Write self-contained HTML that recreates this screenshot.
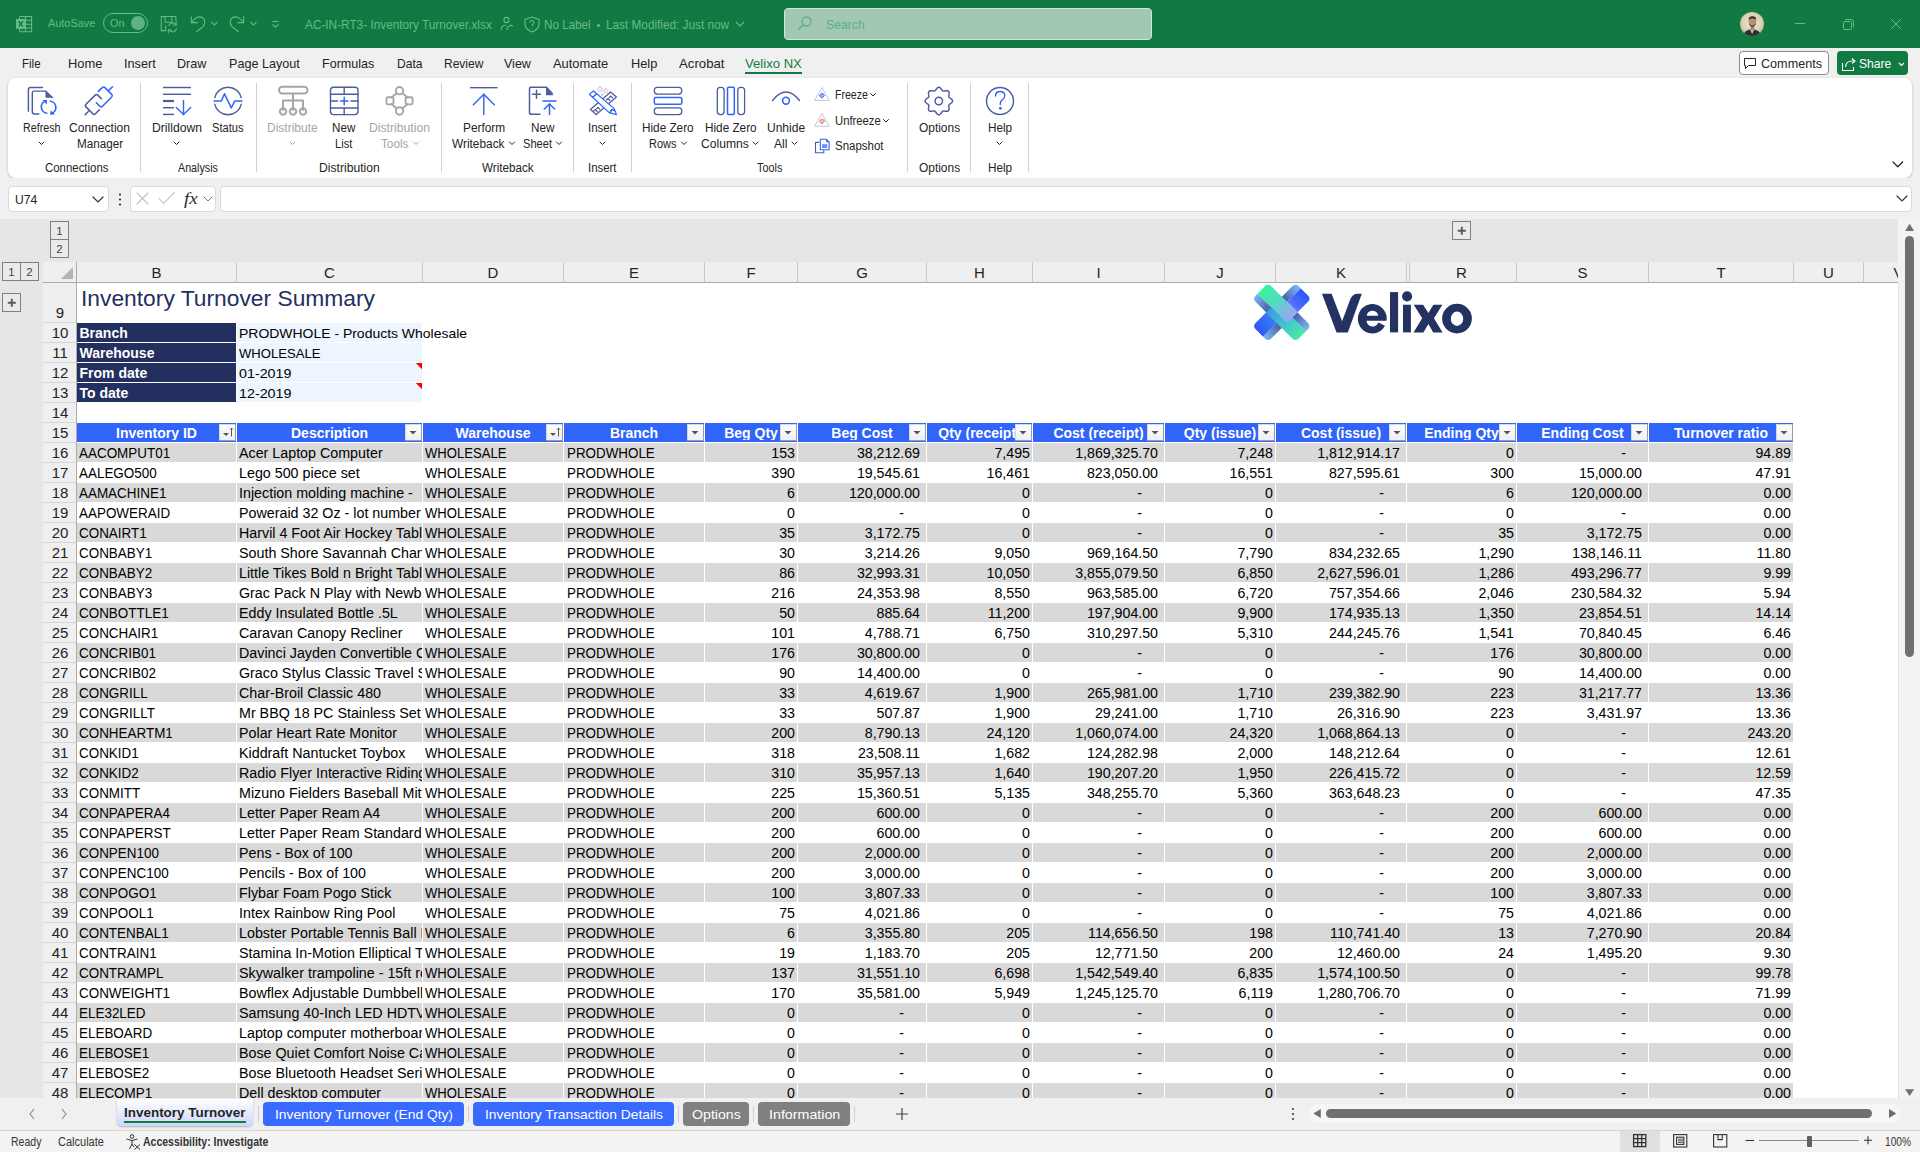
<!DOCTYPE html><html><head><meta charset="utf-8"><title>Excel</title><style>
*{margin:0;padding:0;box-sizing:content-box;}
html,body{width:1920px;height:1152px;overflow:hidden;background:#f0f0f0;font-family:"Liberation Sans",sans-serif;}
.r{position:absolute;}
.t{position:absolute;white-space:nowrap;font-family:"Liberation Sans",sans-serif;}
</style></head><body><div class="r" style="left:0px;top:0px;width:1920px;height:48px;background:#117a42;"></div>
<svg class="r" style="left:10px;top:10px" width="30" height="28" viewBox="10 10 30 28" fill="none" stroke="#66bb88" stroke-width="1.1">
<rect x="19.6" y="16.5" width="12" height="15.2" rx="0.8"/><path d="M25.5 16.5 V31.7 M25.5 20.3 H31.6 M25.5 24.2 H31.6 M25.5 28 H31.6 M19.6 20.3 H25.5 M19.6 28 H25.5"/>
<rect x="16" y="19" width="9.5" height="9.8" fill="#66bb88" stroke="none"/>
<path d="M18.6 21.3 L22.9 26.6 M22.9 21.3 L18.6 26.6" stroke="#117a42" stroke-width="1.4"/></svg>
<div class="t" style="top:18.27px;font-size:11.5px;line-height:11.5px;color:#66bb88;left:48.00px;transform-origin:0 0;transform:scaleX(0.9485);">AutoSave</div>
<div class="r" style="left:103px;top:13px;width:43px;height:18px;border:1px solid #66bb88;border-radius:10px;"></div>
<div class="t" style="top:18.27px;font-size:11.5px;line-height:11.5px;color:#66bb88;left:109.50px;transform-origin:0 0;transform:scaleX(0.9452);">On</div>
<div class="r" style="left:131px;top:16px;width:14px;height:14px;border-radius:7px;background:#5fb283;"></div>
<svg class="r" style="left:140px;top:8px" width="150" height="32" viewBox="140 8 150 32" fill="none" stroke="#66bb88" stroke-width="1.05" stroke-linejoin="miter">
<path d="M175.9 21.2 V16.4 H161.3 V30.6 H165.7 V25.6"/><path d="M165 16.4 V22.2 H171.9 V16.4"/>
<path d="M168.6 26.2 A4.2 4.2 0 0 1 176 24.5"/><path d="M176.6 28.4 A4.2 4.2 0 0 1 169.2 30.2"/>
<path d="M176.2 21.6 V24.9 H173" /><path d="M168.3 33.2 V29.8 H171.6"/>
<path d="M191.3 16.2 V22.6 H197.8"/><path d="M191.9 22.1 C194.5 17.6 199.3 15.6 202.6 17.8 C205.6 19.9 205.3 24.2 203.2 26.3 L196.3 32"/>
<path d="M211.3 21.9 L214.4 24.9 L217.5 21.9"/>
<path d="M243.7 16.2 V22.6 H237.2"/><path d="M243.1 22.1 C240.5 17.6 235.7 15.6 232.4 17.8 C229.4 19.9 229.7 24.2 231.8 26.3 L238.7 32"/>
<path d="M250.3 21.9 L253.4 24.9 L256.5 21.9"/>
<path d="M272.2 21.5 H278.7"/><path d="M272.5 24.4 L275.5 27.2 L278.5 24.4"/>
</svg>
<div class="t" class="fn" style="top:19.07px;font-size:12.2px;line-height:12.2px;color:#66bb88;left:305.00px;transform-origin:0 0;transform:scaleX(0.9689);">AC-IN-RT3- Inventory Turnover.xlsx</div>
<svg class="r" style="left:498px;top:14px" width="250" height="20" viewBox="0 0 250 20" fill="none" stroke="#66bb88" stroke-width="1.1">
<circle cx="8.5" cy="6" r="2.6"/><path d="M3 16 a5 5 0 0 1 5 -5"/><circle cx="4" cy="12" r="0"/><path d="M9 16 a4 4 0 0 1 6 -4"/>
<path d="M34 3 L41 5.5 V10 C41 14 38 16.5 34 18 C30 16.5 27 14 27 10 V5.5 Z"/><path d="M32 8.5 a2 2 0 1 1 2.5 2 v1.5 M34.2 14 v0.5"/>
<path d="M238 8 l4 4 l4 -4"/></svg>
<div class="t" style="top:19.07px;font-size:12.2px;line-height:12.2px;color:#66bb88;left:544.00px;transform-origin:0 0;transform:scaleX(0.9563);">No Label</div>
<div class="r" style="left:596.5px;top:23.5px;width:3px;height:3px;background:#66bb88;border-radius:2px;"></div>
<div class="t" style="top:19.07px;font-size:12.2px;line-height:12.2px;color:#66bb88;left:606.40px;transform-origin:0 0;transform:scaleX(0.9664);">Last Modified: Just now</div>
<div class="r" style="left:784px;top:8px;width:366px;height:30px;background:#a1c8b2;border:1px solid #d4e6da;border-radius:4px;"></div>
<svg class="r" style="left:796px;top:15px" width="18" height="18" viewBox="0 0 18 18" fill="none" stroke="#5fae7f" stroke-width="1.3">
<circle cx="10.5" cy="6.5" r="4.5"/><path d="M7.2 9.8 L2.5 14.5"/></svg>
<div class="t" style="top:18.87px;font-size:12.2px;line-height:12.2px;color:#5fae7f;left:826.00px;transform-origin:0 0;transform:scaleX(1.0037);">Search</div>
<svg class="r" style="left:1740px;top:12px" width="24" height="24" viewBox="0 0 24 24">
<defs><radialGradient id="av" cx="50%" cy="45%" r="60%"><stop offset="0" stop-color="#f2ead6"/><stop offset="0.7" stop-color="#d9cfb4"/><stop offset="1" stop-color="#a89c84"/></radialGradient>
<clipPath id="avc"><circle cx="12" cy="12" r="12"/></clipPath></defs>
<g clip-path="url(#avc)"><rect width="24" height="24" fill="url(#av)"/>
<path d="M3 24 Q4.5 17.5 12 17 Q19.5 17.5 21.5 24Z" fill="#2f2f33"/><path d="M9.8 17.2 L12.2 22 L14.6 17.2 Z" fill="#b9bcc4"/>
<rect x="10.6" y="13" width="3.6" height="4.5" fill="#a8806a"/>
<ellipse cx="12.4" cy="9.6" rx="3.9" ry="4.9" fill="#b98f76"/>
<path d="M8.4 8.6 Q8.2 4.2 12.4 4.2 Q16.6 4.2 16.4 8.6 L15.9 7.2 Q12.4 5.6 8.9 7.2Z" fill="#3b2c24"/>
<path d="M8.8 11 Q9.2 14.6 12.4 14.8 Q15.6 14.6 16 11 Q15 13.2 12.4 13.4 Q9.8 13.2 8.8 11Z" fill="#5a4034"/>
</g></svg>
<svg class="r" style="left:1780px;top:10px" width="140" height="28" viewBox="0 0 140 28" fill="none" stroke="#66bb88" stroke-width="1">
<path d="M15 13.5 H25"/>
<rect x="63.5" y="11.5" width="8" height="8" rx="1"/><path d="M65.5 9.5 H71.5 Q73.5 9.5 73.5 11.5 V17.5"/>
<path d="M111 9 L121 19 M121 9 L111 19"/></svg>
<div class="r" style="left:0px;top:48px;width:1920px;height:30px;background:#f0f0f0;"></div>
<div class="t" class="mn" style="top:57.93px;font-size:12.6px;line-height:12.6px;color:#242424;left:21.90px;transform-origin:0 0;transform:scaleX(0.9161);">File</div>
<div class="t" class="mn" style="top:57.93px;font-size:12.6px;line-height:12.6px;color:#242424;left:68.00px;transform-origin:0 0;transform:scaleX(1.0235);">Home</div>
<div class="t" class="mn" style="top:57.93px;font-size:12.6px;line-height:12.6px;color:#242424;left:124.00px;transform-origin:0 0;transform:scaleX(1.0091);">Insert</div>
<div class="t" class="mn" style="top:57.93px;font-size:12.6px;line-height:12.6px;color:#242424;left:177.20px;transform-origin:0 0;transform:scaleX(1.0033);">Draw</div>
<div class="t" class="mn" style="top:57.93px;font-size:12.6px;line-height:12.6px;color:#242424;left:229.00px;transform-origin:0 0;transform:scaleX(0.9992);">Page Layout</div>
<div class="t" class="mn" style="top:57.93px;font-size:12.6px;line-height:12.6px;color:#242424;left:322.20px;transform-origin:0 0;transform:scaleX(0.9960);">Formulas</div>
<div class="t" class="mn" style="top:57.93px;font-size:12.6px;line-height:12.6px;color:#242424;left:396.70px;transform-origin:0 0;transform:scaleX(0.9619);">Data</div>
<div class="t" class="mn" style="top:57.93px;font-size:12.6px;line-height:12.6px;color:#242424;left:444.40px;transform-origin:0 0;transform:scaleX(0.9537);">Review</div>
<div class="t" class="mn" style="top:57.93px;font-size:12.6px;line-height:12.6px;color:#242424;left:503.90px;transform-origin:0 0;transform:scaleX(0.9932);">View</div>
<div class="t" class="mn" style="top:57.93px;font-size:12.6px;line-height:12.6px;color:#242424;left:553.10px;transform-origin:0 0;transform:scaleX(1.0235);">Automate</div>
<div class="t" class="mn" style="top:57.93px;font-size:12.6px;line-height:12.6px;color:#242424;left:631.20px;transform-origin:0 0;transform:scaleX(1.0149);">Help</div>
<div class="t" class="mn" style="top:57.93px;font-size:12.6px;line-height:12.6px;color:#242424;left:679.40px;transform-origin:0 0;transform:scaleX(1.0478);">Acrobat</div>
<div class="t" class="mn" style="top:57.93px;font-size:12.6px;line-height:12.6px;color:#107c41;left:745.20px;transform-origin:0 0;transform:scaleX(1.0416);">Velixo NX</div>
<div class="r" style="left:745px;top:72px;width:57px;height:2px;background:#107c41;"></div>
<div class="r" style="left:1739px;top:51px;width:88px;height:22px;background:#fff;border:1px solid #8c8c8c;border-radius:4px;"></div>
<svg class="r" style="left:1743px;top:57px" width="14" height="14" viewBox="0 0 14 14" fill="none" stroke="#242424" stroke-width="1">
<path d="M1.5 1.5 H12.5 V8.5 H5.5 L2.5 11.5 V8.5 H1.5 Z"/></svg>
<div class="t" style="top:57.93px;font-size:12.6px;line-height:12.6px;color:#242424;left:1760.60px;transform-origin:0 0;transform:scaleX(1.0014);">Comments</div>
<div class="r" style="left:1837px;top:51px;width:71px;height:24px;background:#117a42;border-radius:4px;"></div>
<svg class="r" style="left:1841px;top:56px" width="70" height="16" viewBox="0 0 70 16" fill="none" stroke="#fff" stroke-width="1.1">
<path d="M1.5 7 V14.5 H12.5 V11"/><path d="M4.5 11 Q5 5 11 5 H13"/><path d="M11 2.5 L14 5 L11 7.5"/><path d="M58 7 l2.5 2.5 l2.5 -2.5"/></svg>
<div class="t" style="top:57.93px;font-size:12.6px;line-height:12.6px;color:#ffffff;left:1858.50px;transform-origin:0 0;transform:scaleX(0.9607);">Share</div>
<div class="r" style="left:8px;top:78px;width:1904px;height:100px;background:#fff;border-radius:8px;box-shadow:0 1px 3px rgba(0,0,0,0.22);"></div>
<div class="r" style="left:140px;top:83px;width:1px;height:89px;background:#d2d2d2;"></div>
<div class="r" style="left:256px;top:83px;width:1px;height:89px;background:#d2d2d2;"></div>
<div class="r" style="left:441px;top:83px;width:1px;height:89px;background:#d2d2d2;"></div>
<div class="r" style="left:573px;top:83px;width:1px;height:89px;background:#d2d2d2;"></div>
<div class="r" style="left:631px;top:83px;width:1px;height:89px;background:#d2d2d2;"></div>
<div class="r" style="left:907px;top:83px;width:1px;height:89px;background:#d2d2d2;"></div>
<div class="r" style="left:970px;top:83px;width:1px;height:89px;background:#d2d2d2;"></div>
<div class="r" style="left:1028px;top:83px;width:1px;height:89px;background:#d2d2d2;"></div>
<div class="t" class="rl" style="top:121.84px;font-size:12px;line-height:12px;color:#242424;left:22.70px;transform-origin:0 0;transform:scaleX(0.8925);">Refresh</div>
<div class="t" class="rl" style="top:121.84px;font-size:12px;line-height:12px;color:#242424;left:68.75px;transform-origin:0 0;transform:scaleX(1.0048);">Connection</div>
<div class="t" class="rl" style="top:137.84px;font-size:12px;line-height:12px;color:#242424;left:76.60px;transform-origin:0 0;transform:scaleX(0.9734);">Manager</div>
<div class="t" class="rl" style="top:121.84px;font-size:12px;line-height:12px;color:#242424;left:151.60px;transform-origin:0 0;transform:scaleX(1.0132);">Drilldown</div>
<div class="t" class="rl" style="top:121.84px;font-size:12px;line-height:12px;color:#242424;left:212.20px;transform-origin:0 0;transform:scaleX(0.9259);">Status</div>
<div class="t" class="rl" style="top:121.84px;font-size:12px;line-height:12px;color:#a6a6a6;left:267.30px;transform-origin:0 0;transform:scaleX(1.0003);">Distribute</div>
<div class="t" class="rl" style="top:121.84px;font-size:12px;line-height:12px;color:#242424;left:332.30px;transform-origin:0 0;transform:scaleX(0.9706);">New</div>
<div class="t" class="rl" style="top:137.84px;font-size:12px;line-height:12px;color:#242424;left:335.30px;transform-origin:0 0;transform:scaleX(0.9264);">List</div>
<div class="t" class="rl" style="top:121.84px;font-size:12px;line-height:12px;color:#a6a6a6;left:369.40px;transform-origin:0 0;transform:scaleX(1.0163);">Distribution</div>
<div class="t" class="rl" style="top:137.84px;font-size:12px;line-height:12px;color:#a6a6a6;left:381.30px;transform-origin:0 0;transform:scaleX(0.9781);">Tools</div>
<div class="t" class="rl" style="top:121.84px;font-size:12px;line-height:12px;color:#242424;left:463.30px;transform-origin:0 0;transform:scaleX(0.9889);">Perform</div>
<div class="t" class="rl" style="top:137.84px;font-size:12px;line-height:12px;color:#242424;left:452.40px;transform-origin:0 0;transform:scaleX(0.9882);">Writeback</div>
<div class="t" class="rl" style="top:121.84px;font-size:12px;line-height:12px;color:#242424;left:531.30px;transform-origin:0 0;transform:scaleX(0.9748);">New</div>
<div class="t" class="rl" style="top:137.84px;font-size:12px;line-height:12px;color:#242424;left:523.00px;transform-origin:0 0;transform:scaleX(0.9248);">Sheet</div>
<div class="t" class="rl" style="top:121.84px;font-size:12px;line-height:12px;color:#242424;left:588.20px;transform-origin:0 0;transform:scaleX(0.9496);">Insert</div>
<div class="t" class="rl" style="top:121.84px;font-size:12px;line-height:12px;color:#242424;left:642.40px;transform-origin:0 0;transform:scaleX(0.9794);">Hide Zero</div>
<div class="t" class="rl" style="top:137.84px;font-size:12px;line-height:12px;color:#242424;left:649.40px;transform-origin:0 0;transform:scaleX(0.9132);">Rows</div>
<div class="t" class="rl" style="top:121.84px;font-size:12px;line-height:12px;color:#242424;left:705.30px;transform-origin:0 0;transform:scaleX(0.9794);">Hide Zero</div>
<div class="t" class="rl" style="top:137.84px;font-size:12px;line-height:12px;color:#242424;left:701.40px;transform-origin:0 0;transform:scaleX(1.0095);">Columns</div>
<div class="t" class="rl" style="top:121.84px;font-size:12px;line-height:12px;color:#242424;left:767.20px;transform-origin:0 0;transform:scaleX(1.0019);">Unhide</div>
<div class="t" class="rl" style="top:137.84px;font-size:12px;line-height:12px;color:#242424;left:774.10px;transform-origin:0 0;transform:scaleX(1.0048);">All</div>
<div class="t" class="rl" style="top:88.84px;font-size:12px;line-height:12px;color:#242424;left:834.60px;transform-origin:0 0;transform:scaleX(0.8782);">Freeze</div>
<div class="t" class="rl" style="top:114.84px;font-size:12px;line-height:12px;color:#242424;left:834.60px;transform-origin:0 0;transform:scaleX(0.9386);">Unfreeze</div>
<div class="t" class="rl" style="top:140.34px;font-size:12px;line-height:12px;color:#242424;left:834.60px;transform-origin:0 0;transform:scaleX(0.9565);">Snapshot</div>
<div class="t" class="rl" style="top:121.84px;font-size:12px;line-height:12px;color:#242424;left:918.60px;transform-origin:0 0;transform:scaleX(0.9938);">Options</div>
<div class="t" class="rl" style="top:121.84px;font-size:12px;line-height:12px;color:#242424;left:987.50px;transform-origin:0 0;transform:scaleX(0.9765);">Help</div>
<div class="t" class="rl" style="top:161.84px;font-size:12px;line-height:12px;color:#242424;left:44.80px;transform-origin:0 0;transform:scaleX(0.9519);">Connections</div>
<div class="t" class="rl" style="top:161.84px;font-size:12px;line-height:12px;color:#242424;left:178.40px;transform-origin:0 0;transform:scaleX(0.8929);">Analysis</div>
<div class="t" class="rl" style="top:161.84px;font-size:12px;line-height:12px;color:#242424;left:318.70px;transform-origin:0 0;transform:scaleX(1.0113);">Distribution</div>
<div class="t" class="rl" style="top:161.84px;font-size:12px;line-height:12px;color:#242424;left:482.20px;transform-origin:0 0;transform:scaleX(0.9713);">Writeback</div>
<div class="t" class="rl" style="top:161.84px;font-size:12px;line-height:12px;color:#242424;left:588.20px;transform-origin:0 0;transform:scaleX(0.9496);">Insert</div>
<div class="t" class="rl" style="top:161.84px;font-size:12px;line-height:12px;color:#242424;left:757.20px;transform-origin:0 0;transform:scaleX(0.9031);">Tools</div>
<div class="t" class="rl" style="top:161.84px;font-size:12px;line-height:12px;color:#242424;left:918.60px;transform-origin:0 0;transform:scaleX(0.9938);">Options</div>
<div class="t" class="rl" style="top:161.84px;font-size:12px;line-height:12px;color:#242424;left:987.50px;transform-origin:0 0;transform:scaleX(0.9765);">Help</div>
<svg class="r" style="left:0;top:78px" width="1920" height="100" viewBox="0 78 1920 100" fill="none" stroke-linecap="round" stroke-linejoin="round">
<!-- chevrons -->
<g stroke="#242424" stroke-width="1">
<path d="M39 142 l2.5 2.5 l2.5 -2.5"/><path d="M174 142 l2.5 2.5 l2.5 -2.5"/><path d="M600 142 l2.5 2.5 l2.5 -2.5"/><path d="M997 142 l2.5 2.5 l2.5 -2.5"/>
<path d="M509.5 142 l2.5 2.5 l2.5 -2.5"/><path d="M556.5 142 l2.5 2.5 l2.5 -2.5"/>
<path d="M681.5 142 l2.5 2.5 l2.5 -2.5"/><path d="M753 142 l2.5 2.5 l2.5 -2.5"/><path d="M792 142 l2.5 2.5 l2.5 -2.5"/>
<path d="M870.5 93.5 l2.5 2.5 l2.5 -2.5"/><path d="M883.5 119.5 l2.5 2.5 l2.5 -2.5"/>
<path d="M1893 162 l4.8 4.8 l4.8 -4.8" stroke-width="1.3"/>
</g>
<g stroke="#a6a6a6" stroke-width="1"><path d="M290 142 l2.5 2.5 l2.5 -2.5"/><path d="M413.5 142 l2.5 2.5 l2.5 -2.5"/></g>
<!-- refresh -->
<g stroke="#4d5d9c" stroke-width="1.45"><path d="M42.4 87.4 H30.5 Q28.4 87.4 28.4 89.5 V111.3"/><path d="M38.8 114 H34.5 Q32.3 114 32.3 111.8 V93.3 Q32.3 91.1 34.5 91.1 H45.5 L52.3 97.6"/></g>
<path d="M45.5 91 L52.6 97.8 H45.5 Z" fill="#4d5d9c"/>
<g stroke="#3165f5" stroke-width="1.65"><path d="M46.8 113.2 A6.3 6.3 0 0 1 46.3 100.8"/><path d="M50.4 101.2 A6.3 6.3 0 0 1 50.9 113.6"/></g>
<path d="M42.5 100 L46.9 100 L46.9 104.4 Z" fill="#3165f5"/><path d="M55 114.6 L50.5 114.6 L50.5 110.2 Z" fill="#3165f5"/>
<!-- connection manager -->
<g stroke="#3165f5" stroke-width="1.55"><path d="M98.3 91.4 L102.3 87.6 Q103.6 86.4 104.9 87.6 L111.7 94.4 Q112.9 95.7 111.7 97 L102.5 106.3 Q101.2 107.6 99.9 106.3 L96.3 102.8"/><path d="M108.5 90.6 L112.5 86.8"/></g>
<g stroke="#4d5d9c" stroke-width="1.55"><path d="M101.4 98.6 L97.8 95.1 Q96.5 93.8 95.2 95.1 L86 104.3 Q84.7 105.6 86 106.9 L92.8 113.7 Q94.1 115 95.4 113.7 L99.4 109.8"/><path d="M88.6 111.3 L85.2 114.6"/></g>
<!-- drilldown -->
<g stroke="#4d5d9c" stroke-width="1.45" stroke-linecap="butt"><path d="M163 87.5 H191"/><path d="M163 94.3 H191"/><path d="M163 101 H174"/><path d="M163 107.7 H174"/><path d="M163 114.4 H174"/></g>
<path d="M163 101 H174" stroke="#4d5d9c" stroke-width="2.2" stroke-linecap="butt"/>
<g stroke="#3165f5" stroke-width="1.45"><path d="M183.5 100.5 V114.5"/><path d="M176.3 107.5 L183.5 114.6 L190.7 107.5"/></g>
<!-- status -->
<g stroke="#4d5d9c" stroke-width="1.4"><path d="M214.7 97.6 A13.7 13.7 0 0 1 241.3 97.6"/><path d="M214.65 104.1 A13.7 13.7 0 0 0 241.35 104.1"/></g>
<path d="M214 101 H221.4 L224.5 93.8 L231.3 108 L234.7 101 H242" stroke="#3165f5" stroke-width="1.55"/>
<!-- distribute (gray) -->
<g stroke="#a6a6a6" stroke-width="2"><rect x="279" y="86.8" width="28.5" height="6.6" rx="3.2"/><path d="M293 93.4 V110"/><path d="M283 110 V100.6 H303 V110"/>
<circle cx="283" cy="111.5" r="3.2"/><circle cx="293" cy="111.5" r="3.2"/><circle cx="303" cy="111.5" r="3.2"/></g>
<!-- new list -->
<g stroke="#4d5d9c" stroke-width="1.4"><rect x="330.5" y="87.3" width="27.5" height="27.3" rx="3"/><path d="M344.2 87.3 V94.2 M344.2 108 V114.6"/><path d="M330.5 94.2 H358 M330.5 108 H358"/><path d="M330.5 101 H337.5 M351 101 H358"/></g>
<g stroke="#3165f5" stroke-width="1.45"><path d="M340.5 101 H348 M344.2 97.3 V104.8"/></g>
<!-- distribution tools (gray) -->
<g stroke="#a6a6a6" stroke-width="1.9"><circle cx="399.5" cy="90.7" r="3.7"/><circle cx="399.5" cy="111" r="3.7"/><rect x="386.5" y="97.2" width="7" height="7.2" rx="1.5"/><rect x="405.6" y="97.2" width="7" height="7.2" rx="1.5"/>
<path d="M396.6 93.2 L391.5 97.5 M402.4 93.2 L407.7 97.5 M391.5 104 L396.6 108.5 M407.7 104 L402.4 108.5"/></g>
<!-- perform writeback -->
<path d="M470 87.7 H497.5" stroke="#4d5d9c" stroke-width="1.4" stroke-linecap="butt"/>
<g stroke="#3165f5" stroke-width="1.45"><path d="M483.8 94.2 V114.5"/><path d="M473.3 104.8 L483.8 94.2 L494.3 104.8"/></g>
<!-- new sheet -->
<g stroke="#4d5d9c" stroke-width="1.5"><path d="M540 114.3 H531.3 Q529.5 114.3 529.5 112.5 V89 Q529.5 87.3 531.3 87.3 H546.5 L552.3 93.5"/><path d="M532.5 94.3 H540.5 M536.5 90.3 V98.3"/></g>
<path d="M546 87.3 L553.5 95.3 H546 Z" fill="#4d5d9c"/>
<g stroke="#3165f5" stroke-width="1.55"><path d="M542.5 101 H556.5" stroke-linecap="butt"/><path d="M549.5 104 V114.5"/><path d="M544.3 109 L549.5 104 L554.7 109"/></g>
<!-- insert (pencil ruler) -->
<g stroke="#4d5d9c" stroke-width="1.3"><path d="M590.4 109.6 L610.6 91.9 L616.4 96.9 L596.2 114.5 Z"/><path d="M593.8 111 l1.6 -1.4 l1.8 1.9 M596.6 108.6 l1.4 -1.2 l1.6 1.6 M606.5 99.8 l1.6 -1.4 l1.7 1.8 M609.4 97.3 l1.4 -1.2 l1.6 1.7"/></g>
<path d="M592.6 97.3 L609.2 112.6 L616.5 114.6 L614.2 108.6 L596.7 93.8 Z" fill="#fff" stroke="#3165f5" stroke-width="1.2"/>
<path d="M589.4 94.2 L593.5 91 L596.7 93.8 L592.6 97.3 Z" fill="#fff" stroke="#3165f5" stroke-width="1.2"/>
<path d="M610.2 112.3 L611.6 109.6 L614.5 110.6" stroke="#3165f5" stroke-width="1.6"/>
<g stroke="#b4b8cc" stroke-width="0.7"><path d="M600 86.3 l0.9 1.7 l1.9 0.3 l-1.4 1.3 l0.3 1.9 l-1.7 -0.9 l-1.7 0.9 l0.3 -1.9 l-1.4 -1.3 l1.9 -0.3 z"/><path d="M605.6 88.5 l0.8 1.5 l1.7 0.3 l-1.2 1.1 l0.3 1.7 l-1.6 -0.8 l-1.5 0.8 l0.3 -1.7 l-1.2 -1.1 l1.7 -0.3 z"/></g>
<circle cx="602.2" cy="94.6" r="1.1" fill="#b8bccc"/>
<!-- hide zero rows -->
<g stroke="#4d5d9c" stroke-width="1.3"><rect x="654.3" y="87.3" width="27.5" height="6.8" rx="3"/><rect x="654.3" y="107.8" width="27.5" height="6.8" rx="3"/></g>
<rect x="654.3" y="97.5" width="27.5" height="6.8" rx="1.5" stroke="#3165f5" stroke-width="1.5"/>
<!-- hide zero columns -->
<g stroke="#4d5d9c" stroke-width="1.3"><rect x="717.3" y="87.3" width="6.8" height="27.3" rx="3"/><rect x="737.8" y="87.3" width="6.8" height="27.3" rx="3"/></g>
<rect x="727.5" y="87.3" width="6.8" height="27.3" rx="1" stroke="#3165f5" stroke-width="1.5"/>
<!-- unhide all -->
<path d="M772.5 100.5 Q786 83.5 799.5 100.5" stroke="#4d5d9c" stroke-width="1.45"/>
<circle cx="786" cy="100.7" r="3.4" stroke="#3165f5" stroke-width="1.65"/>
<!-- freeze/unfreeze/snapshot small -->
<g stroke="#b9bdd6" stroke-width="0.9"><path d="M822.1 87.9 L829.2 100.4 H815 Z"/><path d="M822.1 113.7 L829.2 126.2 H815 Z"/></g>
<g stroke="#3165f5" stroke-width="0.9" fill="none"><path d="M819.6 95.4 L822.1 92.9 L824.6 95.4 L822.1 97.9 Z"/><path d="M819.8 95.4 H824.4 M820.6 94.2 H823.6 M820.6 96.6 H823.6" stroke-width="0.6"/></g>
<g stroke="#f06a5a" stroke-width="0.9" fill="none"><path d="M819.6 121.2 L822.1 118.7 L824.6 121.2 L822.1 123.7 Z"/><path d="M819.8 121.2 H824.4 M820.6 120 H823.6 M820.6 122.4 H823.6" stroke-width="0.6"/></g>
<g stroke="#4d5d9c" stroke-width="1.1"><path d="M818.8 142.4 H815.5 V152.8 H823.8 V150.5"/></g>
<path d="M820.3 139.2 H826.3 L829.1 142 V149.7 H820.3 Z" fill="#fff" stroke="#3165f5" stroke-width="1.1"/>
<path d="M826.1 139.2 L829.1 142.2 H826.1 Z" fill="#3165f5"/>
<path d="M822 144.2 H827.3 V148 H822 Z" fill="#6f8ff5"/>
<!-- options gear -->
<g stroke="#4d5d9c" stroke-width="1.45"><path d="M938.80 87.25 L939.34 87.33 L939.86 87.57 L940.35 87.94 L940.79 88.41 L941.20 88.94 L941.57 89.48 L941.91 89.98 L942.24 90.42 L942.58 90.75 L942.95 90.98 L943.37 91.08 L943.85 91.09 L944.39 91.01 L944.99 90.89 L945.63 90.77 L946.29 90.69 L946.94 90.67 L947.55 90.75 L948.09 90.96 L948.52 91.28 L948.84 91.71 L949.05 92.25 L949.13 92.86 L949.11 93.51 L949.03 94.17 L948.91 94.81 L948.79 95.41 L948.71 95.95 L948.72 96.43 L948.82 96.85 L949.05 97.22 L949.38 97.56 L949.82 97.89 L950.32 98.23 L950.86 98.60 L951.39 99.01 L951.86 99.45 L952.23 99.94 L952.47 100.46 L952.55 101.00 L952.47 101.54 L952.23 102.06 L951.86 102.55 L951.39 102.99 L950.86 103.40 L950.32 103.77 L949.82 104.11 L949.38 104.44 L949.05 104.78 L948.82 105.15 L948.72 105.57 L948.71 106.05 L948.79 106.59 L948.91 107.19 L949.03 107.83 L949.11 108.49 L949.13 109.14 L949.05 109.75 L948.84 110.29 L948.52 110.72 L948.09 111.04 L947.55 111.25 L946.94 111.33 L946.29 111.31 L945.63 111.23 L944.99 111.11 L944.39 110.99 L943.85 110.91 L943.37 110.92 L942.95 111.02 L942.58 111.25 L942.24 111.58 L941.91 112.02 L941.57 112.52 L941.20 113.06 L940.79 113.59 L940.35 114.06 L939.86 114.43 L939.34 114.67 L938.80 114.75 L938.26 114.67 L937.74 114.43 L937.25 114.06 L936.81 113.59 L936.40 113.06 L936.03 112.52 L935.69 112.02 L935.36 111.58 L935.02 111.25 L934.65 111.02 L934.23 110.92 L933.75 110.91 L933.21 110.99 L932.61 111.11 L931.97 111.23 L931.31 111.31 L930.66 111.33 L930.05 111.25 L929.51 111.04 L929.08 110.72 L928.76 110.29 L928.55 109.75 L928.47 109.14 L928.49 108.49 L928.57 107.83 L928.69 107.19 L928.81 106.59 L928.89 106.05 L928.88 105.57 L928.78 105.15 L928.55 104.78 L928.22 104.44 L927.78 104.11 L927.28 103.77 L926.74 103.40 L926.21 102.99 L925.74 102.55 L925.37 102.06 L925.13 101.54 L925.05 101.00 L925.13 100.46 L925.37 99.94 L925.74 99.45 L926.21 99.01 L926.74 98.60 L927.28 98.23 L927.78 97.89 L928.22 97.56 L928.55 97.22 L928.78 96.85 L928.88 96.43 L928.89 95.95 L928.81 95.41 L928.69 94.81 L928.57 94.17 L928.49 93.51 L928.47 92.86 L928.55 92.25 L928.76 91.71 L929.08 91.28 L929.51 90.96 L930.05 90.75 L930.66 90.67 L931.31 90.69 L931.97 90.77 L932.61 90.89 L933.21 91.01 L933.75 91.09 L934.23 91.08 L934.65 90.98 L935.02 90.75 L935.36 90.42 L935.69 89.98 L936.03 89.48 L936.40 88.94 L936.81 88.41 L937.25 87.94 L937.74 87.57 L938.26 87.33 L938.80 87.25 Z"/><circle cx="938.8" cy="101" r="3.7"/></g>
<!-- help -->
<circle cx="1000" cy="101" r="13.5" stroke="#4d5d9c" stroke-width="1.45"/>
<path d="M995.5 96 Q995.5 91.5 1000.2 91.5 Q1004.8 91.5 1004.8 95.8 Q1004.8 98.3 1002.2 99.8 Q1000.3 101 1000.3 103.5 V104.5" stroke="#3165f5" stroke-width="1.45"/>
<circle cx="1000.3" cy="108.3" r="1" fill="#3165f5" stroke="#3165f5"/>
</svg>
<div class="r" style="left:0px;top:178px;width:1920px;height:41px;background:#f0f0f0;"></div>
<div class="r" style="left:8px;top:186px;width:99px;height:24px;background:#fff;border:1px solid #dadada;border-radius:4px;"></div>
<div class="t" style="top:192.94px;font-size:13.3px;line-height:13.3px;color:#242424;left:15.30px;transform-origin:0 0;transform:scaleX(0.9099);">U74</div>
<div class="r" style="left:130px;top:186px;width:84px;height:24px;background:#fff;border:1px solid #dadada;border-radius:4px;"></div>
<div class="r" style="left:220px;top:186px;width:1690px;height:24px;background:#fff;border:1px solid #dadada;border-radius:4px;"></div>
<svg class="r" style="left:0;top:180px" width="1920" height="40" viewBox="0 180 1920 40" fill="none" stroke-linecap="round">
<path d="M93 197 l5 5 l5 -5" stroke="#333" stroke-width="1.2"/>
<circle cx="120" cy="194.5" r="1.1" fill="#333"/><circle cx="120" cy="199.5" r="1.1" fill="#333"/><circle cx="120" cy="204.5" r="1.1" fill="#333"/>
<path d="M137 193 L148 204 M148 193 L137 204" stroke="#c2c2c2" stroke-width="1.1"/>
<path d="M159 198.5 L163.5 203.5 L174.5 192.5" stroke="#c2c2c2" stroke-width="1.1"/>
<path d="M204 197 l4 4 l4 -4" stroke="#777" stroke-width="1"/>
<path d="M1897 196 l5 5 l5 -5" stroke="#333" stroke-width="1.2"/>
</svg>
<div class="t" style="top:189.61px;font-size:17px;line-height:17px;color:#2a2a2a;left:184px;font-family:'Liberation Serif',serif;font-style:italic;transform-origin:0 0;transform:scaleX(1.12);">fx</div>
<div class="r" style="left:0px;top:219px;width:1898px;height:43px;background:#e6e6e6;"></div>
<div class="r" style="left:0px;top:262px;width:43px;height:836px;background:#e6e6e6;"></div>
<div class="r" style="left:50px;top:221px;width:17px;height:17px;border:1px solid #7a8090;background:#eaeaea;"></div><div class="t" style="top:225.77px;font-size:11.5px;line-height:11.5px;color:#444;left:59.5px;transform:translateX(-50%);">1</div>
<div class="r" style="left:50px;top:239px;width:17px;height:17px;border:1px solid #7a8090;background:#eaeaea;"></div><div class="t" style="top:243.77px;font-size:11.5px;line-height:11.5px;color:#444;left:59.5px;transform:translateX(-50%);">2</div>
<div class="r" style="left:2px;top:262px;width:17px;height:17px;border:1px solid #7a8090;background:#eaeaea;"></div><div class="t" style="top:266.77px;font-size:11.5px;line-height:11.5px;color:#444;left:11.5px;transform:translateX(-50%);">1</div>
<div class="r" style="left:20px;top:262px;width:17px;height:17px;border:1px solid #7a8090;background:#eaeaea;"></div><div class="t" style="top:266.77px;font-size:11.5px;line-height:11.5px;color:#444;left:29.5px;transform:translateX(-50%);">2</div>
<div class="r" style="left:2px;top:293px;width:17px;height:17px;border:1px solid #7a8090;background:#eaeaea;"></div><svg class="r" style="left:2px;top:293px" width="19" height="19"><path d="M5.8 9.7 H13.8 M9.8 5.7 V13.7" stroke="#5a5a5a" stroke-width="1.9"/></svg>
<div class="r" style="left:1452px;top:221px;width:17px;height:17px;border:1px solid #7a8090;background:#eaeaea;"></div><svg class="r" style="left:1452px;top:221px" width="19" height="19"><path d="M5.8 9.7 H13.8 M9.8 5.7 V13.7" stroke="#5a5a5a" stroke-width="1.9"/></svg>
<div class="r" style="left:43px;top:262px;width:1855px;height:20px;background:#efefef;"></div>
<div class="r" style="left:43px;top:282px;width:1855px;height:1px;background:#ababab;"></div>
<div class="r" style="left:43px;top:283px;width:34px;height:815px;background:#efefef;"></div>
<div class="r" style="left:76px;top:262px;width:1px;height:836px;background:#ababab;"></div>
<svg class="r" style="left:60px;top:266px" width="14" height="14"><path d="M13 1 V13 H1 Z" fill="#b4b4b4"/></svg>
<div class="t" style="top:265.10px;font-size:15px;line-height:15px;color:#242424;left:156.5px;transform:translateX(-50%);">B</div>
<div class="r" style="left:236px;top:262px;width:1px;height:20px;background:#c8c8c8;"></div>
<div class="t" style="top:265.10px;font-size:15px;line-height:15px;color:#242424;left:329.5px;transform:translateX(-50%);">C</div>
<div class="r" style="left:422px;top:262px;width:1px;height:20px;background:#c8c8c8;"></div>
<div class="t" style="top:265.10px;font-size:15px;line-height:15px;color:#242424;left:493.0px;transform:translateX(-50%);">D</div>
<div class="r" style="left:563px;top:262px;width:1px;height:20px;background:#c8c8c8;"></div>
<div class="t" style="top:265.10px;font-size:15px;line-height:15px;color:#242424;left:634.0px;transform:translateX(-50%);">E</div>
<div class="r" style="left:704px;top:262px;width:1px;height:20px;background:#c8c8c8;"></div>
<div class="t" style="top:265.10px;font-size:15px;line-height:15px;color:#242424;left:751.0px;transform:translateX(-50%);">F</div>
<div class="r" style="left:797px;top:262px;width:1px;height:20px;background:#c8c8c8;"></div>
<div class="t" style="top:265.10px;font-size:15px;line-height:15px;color:#242424;left:862.0px;transform:translateX(-50%);">G</div>
<div class="r" style="left:926px;top:262px;width:1px;height:20px;background:#c8c8c8;"></div>
<div class="t" style="top:265.10px;font-size:15px;line-height:15px;color:#242424;left:979.5px;transform:translateX(-50%);">H</div>
<div class="r" style="left:1032px;top:262px;width:1px;height:20px;background:#c8c8c8;"></div>
<div class="t" style="top:265.10px;font-size:15px;line-height:15px;color:#242424;left:1098.5px;transform:translateX(-50%);">I</div>
<div class="r" style="left:1164px;top:262px;width:1px;height:20px;background:#c8c8c8;"></div>
<div class="t" style="top:265.10px;font-size:15px;line-height:15px;color:#242424;left:1220.0px;transform:translateX(-50%);">J</div>
<div class="r" style="left:1275px;top:262px;width:1px;height:20px;background:#c8c8c8;"></div>
<div class="t" style="top:265.10px;font-size:15px;line-height:15px;color:#242424;left:1341.0px;transform:translateX(-50%);">K</div>
<div class="r" style="left:1406px;top:262px;width:1px;height:20px;background:#c8c8c8;"></div>
<div class="t" style="top:265.10px;font-size:15px;line-height:15px;color:#242424;left:1461.5px;transform:translateX(-50%);">R</div>
<div class="r" style="left:1516px;top:262px;width:1px;height:20px;background:#c8c8c8;"></div>
<div class="t" style="top:265.10px;font-size:15px;line-height:15px;color:#242424;left:1582.5px;transform:translateX(-50%);">S</div>
<div class="r" style="left:1648px;top:262px;width:1px;height:20px;background:#c8c8c8;"></div>
<div class="t" style="top:265.10px;font-size:15px;line-height:15px;color:#242424;left:1721.0px;transform:translateX(-50%);">T</div>
<div class="r" style="left:1793px;top:262px;width:1px;height:20px;background:#c8c8c8;"></div>
<div class="t" style="top:265.10px;font-size:15px;line-height:15px;color:#242424;left:1828.5px;transform:translateX(-50%);">U</div>
<div class="r" style="left:1863px;top:262px;width:1px;height:20px;background:#c8c8c8;"></div>
<div class="t" style="top:265.10px;font-size:15px;line-height:15px;color:#242424;left:1898.5px;transform:translateX(-50%);">V</div>
<div class="r" style="left:1409px;top:262px;width:1px;height:20px;background:#c8c8c8;"></div>
<div class="t" style="top:305.00px;font-size:15px;line-height:15px;color:#242424;left:60px;transform:translateX(-50%);">9</div>
<div class="r" style="left:43px;top:322px;width:33px;height:1px;background:#d6d6d6;"></div>
<div class="t" style="top:325.00px;font-size:15px;line-height:15px;color:#242424;left:60px;transform:translateX(-50%);">10</div>
<div class="r" style="left:43px;top:342px;width:33px;height:1px;background:#d6d6d6;"></div>
<div class="t" style="top:345.00px;font-size:15px;line-height:15px;color:#242424;left:60px;transform:translateX(-50%);">11</div>
<div class="r" style="left:43px;top:362px;width:33px;height:1px;background:#d6d6d6;"></div>
<div class="t" style="top:365.00px;font-size:15px;line-height:15px;color:#242424;left:60px;transform:translateX(-50%);">12</div>
<div class="r" style="left:43px;top:382px;width:33px;height:1px;background:#d6d6d6;"></div>
<div class="t" style="top:385.00px;font-size:15px;line-height:15px;color:#242424;left:60px;transform:translateX(-50%);">13</div>
<div class="r" style="left:43px;top:402px;width:33px;height:1px;background:#d6d6d6;"></div>
<div class="t" style="top:405.00px;font-size:15px;line-height:15px;color:#242424;left:60px;transform:translateX(-50%);">14</div>
<div class="r" style="left:43px;top:422px;width:33px;height:1px;background:#d6d6d6;"></div>
<div class="t" style="top:425.00px;font-size:15px;line-height:15px;color:#242424;left:60px;transform:translateX(-50%);">15</div>
<div class="r" style="left:43px;top:442px;width:33px;height:1px;background:#d6d6d6;"></div>
<div class="t" style="top:445.00px;font-size:15px;line-height:15px;color:#242424;left:60px;transform:translateX(-50%);">16</div>
<div class="r" style="left:43px;top:462px;width:33px;height:1px;background:#d6d6d6;"></div>
<div class="t" style="top:465.00px;font-size:15px;line-height:15px;color:#242424;left:60px;transform:translateX(-50%);">17</div>
<div class="r" style="left:43px;top:482px;width:33px;height:1px;background:#d6d6d6;"></div>
<div class="t" style="top:485.00px;font-size:15px;line-height:15px;color:#242424;left:60px;transform:translateX(-50%);">18</div>
<div class="r" style="left:43px;top:502px;width:33px;height:1px;background:#d6d6d6;"></div>
<div class="t" style="top:505.00px;font-size:15px;line-height:15px;color:#242424;left:60px;transform:translateX(-50%);">19</div>
<div class="r" style="left:43px;top:522px;width:33px;height:1px;background:#d6d6d6;"></div>
<div class="t" style="top:525.00px;font-size:15px;line-height:15px;color:#242424;left:60px;transform:translateX(-50%);">20</div>
<div class="r" style="left:43px;top:542px;width:33px;height:1px;background:#d6d6d6;"></div>
<div class="t" style="top:545.00px;font-size:15px;line-height:15px;color:#242424;left:60px;transform:translateX(-50%);">21</div>
<div class="r" style="left:43px;top:562px;width:33px;height:1px;background:#d6d6d6;"></div>
<div class="t" style="top:565.00px;font-size:15px;line-height:15px;color:#242424;left:60px;transform:translateX(-50%);">22</div>
<div class="r" style="left:43px;top:582px;width:33px;height:1px;background:#d6d6d6;"></div>
<div class="t" style="top:585.00px;font-size:15px;line-height:15px;color:#242424;left:60px;transform:translateX(-50%);">23</div>
<div class="r" style="left:43px;top:602px;width:33px;height:1px;background:#d6d6d6;"></div>
<div class="t" style="top:605.00px;font-size:15px;line-height:15px;color:#242424;left:60px;transform:translateX(-50%);">24</div>
<div class="r" style="left:43px;top:622px;width:33px;height:1px;background:#d6d6d6;"></div>
<div class="t" style="top:625.00px;font-size:15px;line-height:15px;color:#242424;left:60px;transform:translateX(-50%);">25</div>
<div class="r" style="left:43px;top:642px;width:33px;height:1px;background:#d6d6d6;"></div>
<div class="t" style="top:645.00px;font-size:15px;line-height:15px;color:#242424;left:60px;transform:translateX(-50%);">26</div>
<div class="r" style="left:43px;top:662px;width:33px;height:1px;background:#d6d6d6;"></div>
<div class="t" style="top:665.00px;font-size:15px;line-height:15px;color:#242424;left:60px;transform:translateX(-50%);">27</div>
<div class="r" style="left:43px;top:682px;width:33px;height:1px;background:#d6d6d6;"></div>
<div class="t" style="top:685.00px;font-size:15px;line-height:15px;color:#242424;left:60px;transform:translateX(-50%);">28</div>
<div class="r" style="left:43px;top:702px;width:33px;height:1px;background:#d6d6d6;"></div>
<div class="t" style="top:705.00px;font-size:15px;line-height:15px;color:#242424;left:60px;transform:translateX(-50%);">29</div>
<div class="r" style="left:43px;top:722px;width:33px;height:1px;background:#d6d6d6;"></div>
<div class="t" style="top:725.00px;font-size:15px;line-height:15px;color:#242424;left:60px;transform:translateX(-50%);">30</div>
<div class="r" style="left:43px;top:742px;width:33px;height:1px;background:#d6d6d6;"></div>
<div class="t" style="top:745.00px;font-size:15px;line-height:15px;color:#242424;left:60px;transform:translateX(-50%);">31</div>
<div class="r" style="left:43px;top:762px;width:33px;height:1px;background:#d6d6d6;"></div>
<div class="t" style="top:765.00px;font-size:15px;line-height:15px;color:#242424;left:60px;transform:translateX(-50%);">32</div>
<div class="r" style="left:43px;top:782px;width:33px;height:1px;background:#d6d6d6;"></div>
<div class="t" style="top:785.00px;font-size:15px;line-height:15px;color:#242424;left:60px;transform:translateX(-50%);">33</div>
<div class="r" style="left:43px;top:802px;width:33px;height:1px;background:#d6d6d6;"></div>
<div class="t" style="top:805.00px;font-size:15px;line-height:15px;color:#242424;left:60px;transform:translateX(-50%);">34</div>
<div class="r" style="left:43px;top:822px;width:33px;height:1px;background:#d6d6d6;"></div>
<div class="t" style="top:825.00px;font-size:15px;line-height:15px;color:#242424;left:60px;transform:translateX(-50%);">35</div>
<div class="r" style="left:43px;top:842px;width:33px;height:1px;background:#d6d6d6;"></div>
<div class="t" style="top:845.00px;font-size:15px;line-height:15px;color:#242424;left:60px;transform:translateX(-50%);">36</div>
<div class="r" style="left:43px;top:862px;width:33px;height:1px;background:#d6d6d6;"></div>
<div class="t" style="top:865.00px;font-size:15px;line-height:15px;color:#242424;left:60px;transform:translateX(-50%);">37</div>
<div class="r" style="left:43px;top:882px;width:33px;height:1px;background:#d6d6d6;"></div>
<div class="t" style="top:885.00px;font-size:15px;line-height:15px;color:#242424;left:60px;transform:translateX(-50%);">38</div>
<div class="r" style="left:43px;top:902px;width:33px;height:1px;background:#d6d6d6;"></div>
<div class="t" style="top:905.00px;font-size:15px;line-height:15px;color:#242424;left:60px;transform:translateX(-50%);">39</div>
<div class="r" style="left:43px;top:922px;width:33px;height:1px;background:#d6d6d6;"></div>
<div class="t" style="top:925.00px;font-size:15px;line-height:15px;color:#242424;left:60px;transform:translateX(-50%);">40</div>
<div class="r" style="left:43px;top:942px;width:33px;height:1px;background:#d6d6d6;"></div>
<div class="t" style="top:945.00px;font-size:15px;line-height:15px;color:#242424;left:60px;transform:translateX(-50%);">41</div>
<div class="r" style="left:43px;top:962px;width:33px;height:1px;background:#d6d6d6;"></div>
<div class="t" style="top:965.00px;font-size:15px;line-height:15px;color:#242424;left:60px;transform:translateX(-50%);">42</div>
<div class="r" style="left:43px;top:982px;width:33px;height:1px;background:#d6d6d6;"></div>
<div class="t" style="top:985.00px;font-size:15px;line-height:15px;color:#242424;left:60px;transform:translateX(-50%);">43</div>
<div class="r" style="left:43px;top:1002px;width:33px;height:1px;background:#d6d6d6;"></div>
<div class="t" style="top:1005.00px;font-size:15px;line-height:15px;color:#242424;left:60px;transform:translateX(-50%);">44</div>
<div class="r" style="left:43px;top:1022px;width:33px;height:1px;background:#d6d6d6;"></div>
<div class="t" style="top:1025.00px;font-size:15px;line-height:15px;color:#242424;left:60px;transform:translateX(-50%);">45</div>
<div class="r" style="left:43px;top:1042px;width:33px;height:1px;background:#d6d6d6;"></div>
<div class="t" style="top:1045.00px;font-size:15px;line-height:15px;color:#242424;left:60px;transform:translateX(-50%);">46</div>
<div class="r" style="left:43px;top:1062px;width:33px;height:1px;background:#d6d6d6;"></div>
<div class="t" style="top:1065.00px;font-size:15px;line-height:15px;color:#242424;left:60px;transform:translateX(-50%);">47</div>
<div class="r" style="left:43px;top:1082px;width:33px;height:1px;background:#d6d6d6;"></div>
<div class="t" style="top:1085.00px;font-size:15px;line-height:15px;color:#242424;left:60px;transform:translateX(-50%);">48</div>
<div class="r" style="left:43px;top:1102px;width:33px;height:1px;background:#d6d6d6;"></div>
<div class="r" style="left:77px;top:283px;width:1821px;height:815px;background:#ffffff;"></div>
<div class="t" class="title" style="top:288.38px;font-size:22px;line-height:22px;color:#232f5f;left:81.25px;transform-origin:0 0;transform:scaleX(1.0365);">Inventory Turnover Summary</div>
<div class="r" style="left:77px;top:323px;width:159px;height:19px;background:#232f5f;"></div>
<div class="r" style="left:237px;top:323px;width:185px;height:19px;background:#edf5fe;"></div>
<div class="t" class="lb" style="top:326.15px;font-size:14px;line-height:14px;color:#ffffff;font-weight:700;left:79.5px;">Branch</div>
<div class="t" class="tx" style="top:326.66px;font-size:13.4px;line-height:13.4px;color:#000000;left:239.20px;transform-origin:0 0;transform:scaleX(1.0423);">PRODWHOLE - Products Wholesale</div>
<div class="r" style="left:77px;top:343px;width:159px;height:19px;background:#232f5f;"></div>
<div class="r" style="left:237px;top:343px;width:185px;height:19px;background:#edf5fe;"></div>
<div class="t" class="lb" style="top:346.15px;font-size:14px;line-height:14px;color:#ffffff;font-weight:700;left:79.5px;">Warehouse</div>
<div class="t" class="tx" style="top:346.66px;font-size:13.4px;line-height:13.4px;color:#000000;left:239.20px;transform-origin:0 0;transform:scaleX(0.9784);">WHOLESALE</div>
<div class="r" style="left:77px;top:363px;width:159px;height:19px;background:#232f5f;"></div>
<div class="r" style="left:237px;top:363px;width:185px;height:19px;background:#edf5fe;"></div>
<div class="t" class="lb" style="top:366.15px;font-size:14px;line-height:14px;color:#ffffff;font-weight:700;left:79.5px;">From date</div>
<div class="t" class="tx" style="top:366.66px;font-size:13.4px;line-height:13.4px;color:#000000;left:239.20px;transform-origin:0 0;transform:scaleX(1.0676);">01-2019</div>
<div class="r" style="left:77px;top:383px;width:159px;height:19px;background:#232f5f;"></div>
<div class="r" style="left:237px;top:383px;width:185px;height:19px;background:#edf5fe;"></div>
<div class="t" class="lb" style="top:386.15px;font-size:14px;line-height:14px;color:#ffffff;font-weight:700;left:79.5px;">To date</div>
<div class="t" class="tx" style="top:386.66px;font-size:13.4px;line-height:13.4px;color:#000000;left:239.20px;transform-origin:0 0;transform:scaleX(1.0676);">12-2019</div>
<svg class="r" style="left:414px;top:363px" width="9" height="30"><path d="M1.8 0 H8 V6.3 Z M1.8 20 H8 V26.3 Z" fill="#ff0000"/></svg>
<svg class="r" style="left:0;top:0" width="1920" height="400" viewBox="0 0 1920 400">
<defs>
<clipPath id="xc"><rect transform="translate(1281.8,312.4) rotate(45)" x="-30.6" y="-11.2" width="61.2" height="22.4" rx="4.5"/><rect transform="translate(1281.8,312.4) rotate(45)" x="-11.2" y="-30.6" width="22.4" height="61.2" rx="4.5"/></clipPath>
<linearGradient id="vl" gradientUnits="userSpaceOnUse" x1="-30.6" y1="0" x2="11.2" y2="0"><stop offset="0" stop-color="#33f59a"/><stop offset="0.45" stop-color="#52dcc0"/><stop offset="1" stop-color="#9ea2f9"/></linearGradient>
<linearGradient id="vr" gradientUnits="userSpaceOnUse" x1="0" y1="0" x2="0" y2="-30.6"><stop offset="0" stop-color="#8f98f8"/><stop offset="0.55" stop-color="#4a6afc"/><stop offset="1" stop-color="#2a5afe"/></linearGradient>
<linearGradient id="ll" gradientUnits="userSpaceOnUse" x1="0" y1="30.6" x2="0" y2="0"><stop offset="0" stop-color="#2b58fc"/><stop offset="1" stop-color="#3d90ee"/></linearGradient>
<linearGradient id="lr" gradientUnits="userSpaceOnUse" x1="-11.2" y1="0" x2="30.6" y2="0"><stop offset="0" stop-color="#3c9ae8"/><stop offset="0.5" stop-color="#40c2d0"/><stop offset="1" stop-color="#46eca6"/></linearGradient>
<linearGradient id="tu" gradientUnits="userSpaceOnUse" x1="-30.6" y1="0" x2="-11.2" y2="0"><stop offset="0" stop-color="#7cb9f8"/><stop offset="1" stop-color="#4a62a6"/></linearGradient>
<linearGradient id="td" gradientUnits="userSpaceOnUse" x1="30.6" y1="0" x2="11.2" y2="0"><stop offset="0" stop-color="#7cb9f8"/><stop offset="1" stop-color="#4a62a6"/></linearGradient>
<linearGradient id="tw1" gradientUnits="userSpaceOnUse" x1="0" y1="-30.6" x2="0" y2="-11.2"><stop offset="0" stop-color="#7cb9f8"/><stop offset="1" stop-color="#4a62a6"/></linearGradient>
<linearGradient id="tw2" gradientUnits="userSpaceOnUse" x1="0" y1="30.6" x2="0" y2="11.2"><stop offset="0" stop-color="#7cb9f8"/><stop offset="1" stop-color="#4a62a6"/></linearGradient>
</defs>
<g clip-path="url(#xc)"><g transform="translate(1281.8,312.4) rotate(45)">
<rect x="-30.6" y="3.7" width="20.000000000000004" height="7.499999999999999" fill="url(#tu)"/>
<rect x="10.6" y="-11.2" width="20.000000000000004" height="7.499999999999999" fill="url(#td)"/>
<rect x="-11.2" y="-30.6" width="7.499999999999999" height="20.000000000000004" fill="url(#tw1)"/>
<rect x="3.7" y="10.6" width="7.499999999999999" height="20.000000000000004" fill="url(#tw2)"/>
<path d="M-11.20,30.60 L3.70,30.60 L3.70,-3.70 L-11.20,-3.70 Z" fill="url(#ll)"/>
<path d="M-11.20,-3.70 L30.60,-3.70 L30.60,11.20 L-11.20,11.20 Z" fill="url(#lr)"/>
<path d="M-30.60,-11.20 L11.20,-11.20 L11.20,3.70 L-30.60,3.70 Z" fill="url(#vl)"/>
<path d="M-3.70,-11.20 L11.20,-11.20 L11.20,-30.60 L-3.70,-30.60 Z" fill="url(#vr)"/>
</g></g>
<g fill="#243262">
<path d="M1322,293.7 L1331.6,293.7 L1342.1,321.2 L1350.3,299.3 Q1352.4,293.7 1357.8,293.7 L1361.8,293.7 L1347.8,332.4 L1336.5,332.4 Z"/>
<path fill-rule="evenodd" d="M1386.62,320.70 L1366.60,320.70 L1366.61,321.11 L1366.66,321.52 L1366.73,321.92 L1366.84,322.32 L1366.97,322.71 L1367.13,323.09 L1367.32,323.45 L1367.53,323.81 L1367.77,324.15 L1368.04,324.47 L1368.32,324.77 L1368.63,325.05 L1368.96,325.31 L1369.31,325.55 L1369.67,325.76 L1370.05,325.95 L1370.44,326.11 L1370.84,326.24 L1371.25,326.35 L1371.66,326.43 L1372.08,326.48 L1372.51,326.50 L1372.93,326.49 L1373.35,326.45 L1373.77,326.39 L1374.18,326.29 L1374.59,326.17 L1374.98,326.02 L1375.37,325.85 L1375.73,325.65 L1376.09,325.42 L1376.42,325.17 L1376.74,324.90 L1377.04,324.60 L1377.31,324.29 L1377.56,323.96 L1377.79,323.61 L1377.99,323.25 L1378.16,322.88 L1378.31,322.49 L1384.98,325.80 L1383.82,327.62 L1382.41,329.25 L1380.78,330.65 L1378.96,331.80 L1377.00,332.65 L1374.93,333.20 L1372.81,333.44 L1370.68,333.36 L1368.58,332.95 L1366.56,332.24 L1364.67,331.23 L1362.94,329.95 L1361.42,328.43 L1360.14,326.69 L1359.12,324.78 L1358.39,322.74 L1357.97,320.61 L1357.85,318.44 L1358.06,316.28 L1358.57,314.17 L1359.38,312.16 L1360.48,310.30 L1361.83,308.62 L1363.41,307.16 L1365.19,305.95 L1367.12,305.03 L1369.16,304.40 L1371.28,304.09 L1373.41,304.09 L1375.52,304.42 L1377.56,305.06 L1379.49,306.00 L1381.26,307.21 L1382.83,308.68 L1384.17,310.37 L1385.26,312.24 L1386.06,314.26 L1386.56,316.37 L1386.75,318.53 L1386.62,320.70 Z M1366.80,315.80 L1366.82,315.41 L1366.87,315.02 L1366.96,314.63 L1367.08,314.25 L1367.23,313.89 L1367.42,313.53 L1367.63,313.19 L1367.88,312.86 L1368.15,312.55 L1368.45,312.26 L1368.78,312.00 L1369.13,311.75 L1369.50,311.54 L1369.88,311.34 L1370.29,311.18 L1370.70,311.04 L1371.13,310.94 L1371.57,310.86 L1372.01,310.82 L1372.45,310.80 L1372.89,310.82 L1373.33,310.86 L1373.77,310.94 L1374.20,311.04 L1374.61,311.18 L1375.02,311.34 L1375.40,311.54 L1375.77,311.75 L1376.12,312.00 L1376.45,312.26 L1376.75,312.55 L1377.02,312.86 L1377.27,313.19 L1377.48,313.53 L1377.67,313.89 L1377.82,314.25 L1377.94,314.63 L1378.03,315.02 L1378.08,315.41 L1378.10,315.80 Z"/>
<rect x="1390" y="292.1" width="8.1" height="40.3"/>
<rect x="1403" y="304.75" width="7.9" height="27.65"/>
<circle cx="1407.1" cy="296.4" r="5.05"/>
<path d="M1413.75,304.75 L1423.1,304.75 L1428.4,313 L1433.4,304.75 L1442.35,304.75 L1433.9,318.35 L1442.6,332.4 L1433.2,332.4 L1428.4,324 L1423.4,332.4 L1413.5,332.4 L1422.2,318.35 Z"/>
<path fill-rule="evenodd" d="M1442.1,318.6 A14.9,14.8 0 1 0 1471.9,318.6 A14.9,14.8 0 1 0 1442.1,318.6 Z M1450.8,318.7 A6.2,7.15 0 1 0 1463.2,318.7 A6.2,7.15 0 1 0 1450.8,318.7 Z"/>
</g></svg>
<div class="r" style="left:77px;top:423px;width:159px;height:19px;background:#3064fa;"></div>
<div class="t hd" style="left:77px;width:159px;top:426.15px;font-size:14px;line-height:14px;color:#fff;font-weight:700;text-align:center;overflow:hidden;white-space:nowrap;">Inventory ID</div>
<div class="r" style="left:219px;top:424px;width:16px;height:16px;background:linear-gradient(#fdfdfd,#eef0f5);border-right:1px solid #9a9a9a;border-bottom:1px solid #9a9a9a;box-shadow:inset 1px 1px 0 #d8d8d8;"></div>
<svg class="r" style="left:219px;top:424px" width="17" height="17"><path d="M4 9 H10 L7 12 Z" fill="#555"/><path d="M12.5 4 V12.5 M11 5.5 L12.5 4 L14 5.5" stroke="#555" stroke-width="1" fill="none"/></svg>
<div class="r" style="left:237px;top:423px;width:185px;height:19px;background:#3064fa;"></div>
<div class="t hd" style="left:237px;width:185px;top:426.15px;font-size:14px;line-height:14px;color:#fff;font-weight:700;text-align:center;overflow:hidden;white-space:nowrap;">Description</div>
<div class="r" style="left:405px;top:424px;width:16px;height:16px;background:linear-gradient(#fdfdfd,#eef0f5);border-right:1px solid #9a9a9a;border-bottom:1px solid #9a9a9a;box-shadow:inset 1px 1px 0 #d8d8d8;"></div>
<svg class="r" style="left:405px;top:424px" width="17" height="17"><path d="M4.5 7 H11.5 L8 10.5 Z" fill="#555"/></svg>
<div class="r" style="left:423px;top:423px;width:140px;height:19px;background:#3064fa;"></div>
<div class="t hd" style="left:423px;width:140px;top:426.15px;font-size:14px;line-height:14px;color:#fff;font-weight:700;text-align:center;overflow:hidden;white-space:nowrap;">Warehouse</div>
<div class="r" style="left:546px;top:424px;width:16px;height:16px;background:linear-gradient(#fdfdfd,#eef0f5);border-right:1px solid #9a9a9a;border-bottom:1px solid #9a9a9a;box-shadow:inset 1px 1px 0 #d8d8d8;"></div>
<svg class="r" style="left:546px;top:424px" width="17" height="17"><path d="M4 9 H10 L7 12 Z" fill="#555"/><path d="M12.5 4 V12.5 M11 5.5 L12.5 4 L14 5.5" stroke="#555" stroke-width="1" fill="none"/></svg>
<div class="r" style="left:564px;top:423px;width:140px;height:19px;background:#3064fa;"></div>
<div class="t hd" style="left:564px;width:140px;top:426.15px;font-size:14px;line-height:14px;color:#fff;font-weight:700;text-align:center;overflow:hidden;white-space:nowrap;">Branch</div>
<div class="r" style="left:687px;top:424px;width:16px;height:16px;background:linear-gradient(#fdfdfd,#eef0f5);border-right:1px solid #9a9a9a;border-bottom:1px solid #9a9a9a;box-shadow:inset 1px 1px 0 #d8d8d8;"></div>
<svg class="r" style="left:687px;top:424px" width="17" height="17"><path d="M4.5 7 H11.5 L8 10.5 Z" fill="#555"/></svg>
<div class="r" style="left:705px;top:423px;width:92px;height:19px;background:#3064fa;"></div>
<div class="t hd" style="left:705px;width:92px;top:426.15px;font-size:14px;line-height:14px;color:#fff;font-weight:700;text-align:center;overflow:hidden;white-space:nowrap;">Beg Qty</div>
<div class="r" style="left:780px;top:424px;width:16px;height:16px;background:linear-gradient(#fdfdfd,#eef0f5);border-right:1px solid #9a9a9a;border-bottom:1px solid #9a9a9a;box-shadow:inset 1px 1px 0 #d8d8d8;"></div>
<svg class="r" style="left:780px;top:424px" width="17" height="17"><path d="M4.5 7 H11.5 L8 10.5 Z" fill="#555"/></svg>
<div class="r" style="left:798px;top:423px;width:128px;height:19px;background:#3064fa;"></div>
<div class="t hd" style="left:798px;width:128px;top:426.15px;font-size:14px;line-height:14px;color:#fff;font-weight:700;text-align:center;overflow:hidden;white-space:nowrap;">Beg Cost</div>
<div class="r" style="left:909px;top:424px;width:16px;height:16px;background:linear-gradient(#fdfdfd,#eef0f5);border-right:1px solid #9a9a9a;border-bottom:1px solid #9a9a9a;box-shadow:inset 1px 1px 0 #d8d8d8;"></div>
<svg class="r" style="left:909px;top:424px" width="17" height="17"><path d="M4.5 7 H11.5 L8 10.5 Z" fill="#555"/></svg>
<div class="r" style="left:927px;top:423px;width:105px;height:19px;background:#3064fa;"></div>
<div class="t hd" style="left:927px;width:105px;top:426.15px;font-size:14px;line-height:14px;color:#fff;font-weight:700;text-align:center;overflow:hidden;white-space:nowrap;">Qty (receipt)</div>
<div class="r" style="left:1015px;top:424px;width:16px;height:16px;background:linear-gradient(#fdfdfd,#eef0f5);border-right:1px solid #9a9a9a;border-bottom:1px solid #9a9a9a;box-shadow:inset 1px 1px 0 #d8d8d8;"></div>
<svg class="r" style="left:1015px;top:424px" width="17" height="17"><path d="M4.5 7 H11.5 L8 10.5 Z" fill="#555"/></svg>
<div class="r" style="left:1033px;top:423px;width:131px;height:19px;background:#3064fa;"></div>
<div class="t hd" style="left:1033px;width:131px;top:426.15px;font-size:14px;line-height:14px;color:#fff;font-weight:700;text-align:center;overflow:hidden;white-space:nowrap;">Cost (receipt)</div>
<div class="r" style="left:1147px;top:424px;width:16px;height:16px;background:linear-gradient(#fdfdfd,#eef0f5);border-right:1px solid #9a9a9a;border-bottom:1px solid #9a9a9a;box-shadow:inset 1px 1px 0 #d8d8d8;"></div>
<svg class="r" style="left:1147px;top:424px" width="17" height="17"><path d="M4.5 7 H11.5 L8 10.5 Z" fill="#555"/></svg>
<div class="r" style="left:1165px;top:423px;width:110px;height:19px;background:#3064fa;"></div>
<div class="t hd" style="left:1165px;width:110px;top:426.15px;font-size:14px;line-height:14px;color:#fff;font-weight:700;text-align:center;overflow:hidden;white-space:nowrap;">Qty (issue)</div>
<div class="r" style="left:1258px;top:424px;width:16px;height:16px;background:linear-gradient(#fdfdfd,#eef0f5);border-right:1px solid #9a9a9a;border-bottom:1px solid #9a9a9a;box-shadow:inset 1px 1px 0 #d8d8d8;"></div>
<svg class="r" style="left:1258px;top:424px" width="17" height="17"><path d="M4.5 7 H11.5 L8 10.5 Z" fill="#555"/></svg>
<div class="r" style="left:1276px;top:423px;width:130px;height:19px;background:#3064fa;"></div>
<div class="t hd" style="left:1276px;width:130px;top:426.15px;font-size:14px;line-height:14px;color:#fff;font-weight:700;text-align:center;overflow:hidden;white-space:nowrap;">Cost (issue)</div>
<div class="r" style="left:1389px;top:424px;width:16px;height:16px;background:linear-gradient(#fdfdfd,#eef0f5);border-right:1px solid #9a9a9a;border-bottom:1px solid #9a9a9a;box-shadow:inset 1px 1px 0 #d8d8d8;"></div>
<svg class="r" style="left:1389px;top:424px" width="17" height="17"><path d="M4.5 7 H11.5 L8 10.5 Z" fill="#555"/></svg>
<div class="r" style="left:1407px;top:423px;width:109px;height:19px;background:#3064fa;"></div>
<div class="t hd" style="left:1407px;width:109px;top:426.15px;font-size:14px;line-height:14px;color:#fff;font-weight:700;text-align:center;overflow:hidden;white-space:nowrap;">Ending Qty</div>
<div class="r" style="left:1499px;top:424px;width:16px;height:16px;background:linear-gradient(#fdfdfd,#eef0f5);border-right:1px solid #9a9a9a;border-bottom:1px solid #9a9a9a;box-shadow:inset 1px 1px 0 #d8d8d8;"></div>
<svg class="r" style="left:1499px;top:424px" width="17" height="17"><path d="M4.5 7 H11.5 L8 10.5 Z" fill="#555"/></svg>
<div class="r" style="left:1517px;top:423px;width:131px;height:19px;background:#3064fa;"></div>
<div class="t hd" style="left:1517px;width:131px;top:426.15px;font-size:14px;line-height:14px;color:#fff;font-weight:700;text-align:center;overflow:hidden;white-space:nowrap;">Ending Cost</div>
<div class="r" style="left:1631px;top:424px;width:16px;height:16px;background:linear-gradient(#fdfdfd,#eef0f5);border-right:1px solid #9a9a9a;border-bottom:1px solid #9a9a9a;box-shadow:inset 1px 1px 0 #d8d8d8;"></div>
<svg class="r" style="left:1631px;top:424px" width="17" height="17"><path d="M4.5 7 H11.5 L8 10.5 Z" fill="#555"/></svg>
<div class="r" style="left:1649px;top:423px;width:144px;height:19px;background:#3064fa;"></div>
<div class="t hd" style="left:1649px;width:144px;top:426.15px;font-size:14px;line-height:14px;color:#fff;font-weight:700;text-align:center;overflow:hidden;white-space:nowrap;">Turnover ratio</div>
<div class="r" style="left:1776px;top:424px;width:16px;height:16px;background:linear-gradient(#fdfdfd,#eef0f5);border-right:1px solid #9a9a9a;border-bottom:1px solid #9a9a9a;box-shadow:inset 1px 1px 0 #d8d8d8;"></div>
<svg class="r" style="left:1776px;top:424px" width="17" height="17"><path d="M4.5 7 H11.5 L8 10.5 Z" fill="#555"/></svg>
<div class="r" style="left:77px;top:443px;width:159px;height:19px;background:#d9d9d9;"></div><div class="r" style="left:237px;top:443px;width:185px;height:19px;background:#d9d9d9;"></div><div class="r" style="left:423px;top:443px;width:140px;height:19px;background:#d9d9d9;"></div><div class="r" style="left:564px;top:443px;width:140px;height:19px;background:#d9d9d9;"></div><div class="r" style="left:705px;top:443px;width:92px;height:19px;background:#d9d9d9;"></div><div class="r" style="left:798px;top:443px;width:128px;height:19px;background:#d9d9d9;"></div><div class="r" style="left:927px;top:443px;width:105px;height:19px;background:#d9d9d9;"></div><div class="r" style="left:1033px;top:443px;width:131px;height:19px;background:#d9d9d9;"></div><div class="r" style="left:1165px;top:443px;width:110px;height:19px;background:#d9d9d9;"></div><div class="r" style="left:1276px;top:443px;width:130px;height:19px;background:#d9d9d9;"></div><div class="r" style="left:1407px;top:443px;width:109px;height:19px;background:#d9d9d9;"></div><div class="r" style="left:1517px;top:443px;width:131px;height:19px;background:#d9d9d9;"></div><div class="r" style="left:1649px;top:443px;width:144px;height:19px;background:#d9d9d9;"></div><div class="t" class="tx" style="top:446.15px;font-size:14px;line-height:14px;color:#000;left:79.00px;transform-origin:0 0;transform:scaleX(0.9600);">AACOMPUT01</div><div class="r" style="left:239px;width:183px;top:443px;height:19px;overflow:hidden;"><div class="t tx" style="left:0;top:3.15px;font-size:14px;line-height:14px;color:#000;transform-origin:0 0;transform:scaleX(1.02);">Acer Laptop Computer</div></div><div class="t" class="tx" style="top:446.15px;font-size:14px;line-height:14px;color:#000;left:425.30px;transform-origin:0 0;transform:scaleX(0.9341);">WHOLESALE</div><div class="t" class="tx" style="top:446.15px;font-size:14px;line-height:14px;color:#000;left:566.60px;transform-origin:0 0;transform:scaleX(0.9566);">PRODWHOLE</div><div class="t" class="nm" style="top:446.48px;font-size:14.2px;line-height:14.2px;color:#000;right:1125px;">153</div><div class="t" class="nm" style="top:446.48px;font-size:14.2px;line-height:14.2px;color:#000;right:1000px;">38,212.69</div><div class="t" class="nm" style="top:446.48px;font-size:14.2px;line-height:14.2px;color:#000;right:890px;">7,495</div><div class="t" class="nm" style="top:446.48px;font-size:14.2px;line-height:14.2px;color:#000;right:762px;">1,869,325.70</div><div class="t" class="nm" style="top:446.48px;font-size:14.2px;line-height:14.2px;color:#000;right:647px;">7,248</div><div class="t" class="nm" style="top:446.48px;font-size:14.2px;line-height:14.2px;color:#000;right:520px;">1,812,914.17</div><div class="t" class="nm" style="top:446.48px;font-size:14.2px;line-height:14.2px;color:#000;right:406px;">0</div><div class="t" class="nm" style="top:446.48px;font-size:14.2px;line-height:14.2px;color:#000;right:294px;">-</div><div class="t" class="nm" style="top:446.48px;font-size:14.2px;line-height:14.2px;color:#000;right:129px;">94.89</div><div class="t" class="tx" style="top:466.15px;font-size:14px;line-height:14px;color:#000;left:79.00px;transform-origin:0 0;transform:scaleX(0.9600);">AALEGO500</div><div class="r" style="left:239px;width:183px;top:463px;height:19px;overflow:hidden;"><div class="t tx" style="left:0;top:3.15px;font-size:14px;line-height:14px;color:#000;transform-origin:0 0;transform:scaleX(1.02);">Lego 500 piece set</div></div><div class="t" class="tx" style="top:466.15px;font-size:14px;line-height:14px;color:#000;left:425.30px;transform-origin:0 0;transform:scaleX(0.9341);">WHOLESALE</div><div class="t" class="tx" style="top:466.15px;font-size:14px;line-height:14px;color:#000;left:566.60px;transform-origin:0 0;transform:scaleX(0.9566);">PRODWHOLE</div><div class="t" class="nm" style="top:466.48px;font-size:14.2px;line-height:14.2px;color:#000;right:1125px;">390</div><div class="t" class="nm" style="top:466.48px;font-size:14.2px;line-height:14.2px;color:#000;right:1000px;">19,545.61</div><div class="t" class="nm" style="top:466.48px;font-size:14.2px;line-height:14.2px;color:#000;right:890px;">16,461</div><div class="t" class="nm" style="top:466.48px;font-size:14.2px;line-height:14.2px;color:#000;right:762px;">823,050.00</div><div class="t" class="nm" style="top:466.48px;font-size:14.2px;line-height:14.2px;color:#000;right:647px;">16,551</div><div class="t" class="nm" style="top:466.48px;font-size:14.2px;line-height:14.2px;color:#000;right:520px;">827,595.61</div><div class="t" class="nm" style="top:466.48px;font-size:14.2px;line-height:14.2px;color:#000;right:406px;">300</div><div class="t" class="nm" style="top:466.48px;font-size:14.2px;line-height:14.2px;color:#000;right:278px;">15,000.00</div><div class="t" class="nm" style="top:466.48px;font-size:14.2px;line-height:14.2px;color:#000;right:129px;">47.91</div><div class="r" style="left:77px;top:483px;width:159px;height:19px;background:#d9d9d9;"></div><div class="r" style="left:237px;top:483px;width:185px;height:19px;background:#d9d9d9;"></div><div class="r" style="left:423px;top:483px;width:140px;height:19px;background:#d9d9d9;"></div><div class="r" style="left:564px;top:483px;width:140px;height:19px;background:#d9d9d9;"></div><div class="r" style="left:705px;top:483px;width:92px;height:19px;background:#d9d9d9;"></div><div class="r" style="left:798px;top:483px;width:128px;height:19px;background:#d9d9d9;"></div><div class="r" style="left:927px;top:483px;width:105px;height:19px;background:#d9d9d9;"></div><div class="r" style="left:1033px;top:483px;width:131px;height:19px;background:#d9d9d9;"></div><div class="r" style="left:1165px;top:483px;width:110px;height:19px;background:#d9d9d9;"></div><div class="r" style="left:1276px;top:483px;width:130px;height:19px;background:#d9d9d9;"></div><div class="r" style="left:1407px;top:483px;width:109px;height:19px;background:#d9d9d9;"></div><div class="r" style="left:1517px;top:483px;width:131px;height:19px;background:#d9d9d9;"></div><div class="r" style="left:1649px;top:483px;width:144px;height:19px;background:#d9d9d9;"></div><div class="t" class="tx" style="top:486.15px;font-size:14px;line-height:14px;color:#000;left:79.00px;transform-origin:0 0;transform:scaleX(0.9600);">AAMACHINE1</div><div class="r" style="left:239px;width:183px;top:483px;height:19px;overflow:hidden;"><div class="t tx" style="left:0;top:3.15px;font-size:14px;line-height:14px;color:#000;transform-origin:0 0;transform:scaleX(1.02);">Injection molding machine -  </div></div><div class="t" class="tx" style="top:486.15px;font-size:14px;line-height:14px;color:#000;left:425.30px;transform-origin:0 0;transform:scaleX(0.9341);">WHOLESALE</div><div class="t" class="tx" style="top:486.15px;font-size:14px;line-height:14px;color:#000;left:566.60px;transform-origin:0 0;transform:scaleX(0.9566);">PRODWHOLE</div><div class="t" class="nm" style="top:486.48px;font-size:14.2px;line-height:14.2px;color:#000;right:1125px;">6</div><div class="t" class="nm" style="top:486.48px;font-size:14.2px;line-height:14.2px;color:#000;right:1000px;">120,000.00</div><div class="t" class="nm" style="top:486.48px;font-size:14.2px;line-height:14.2px;color:#000;right:890px;">0</div><div class="t" class="nm" style="top:486.48px;font-size:14.2px;line-height:14.2px;color:#000;right:778px;">-</div><div class="t" class="nm" style="top:486.48px;font-size:14.2px;line-height:14.2px;color:#000;right:647px;">0</div><div class="t" class="nm" style="top:486.48px;font-size:14.2px;line-height:14.2px;color:#000;right:536px;">-</div><div class="t" class="nm" style="top:486.48px;font-size:14.2px;line-height:14.2px;color:#000;right:406px;">6</div><div class="t" class="nm" style="top:486.48px;font-size:14.2px;line-height:14.2px;color:#000;right:278px;">120,000.00</div><div class="t" class="nm" style="top:486.48px;font-size:14.2px;line-height:14.2px;color:#000;right:129px;">0.00</div><div class="t" class="tx" style="top:506.15px;font-size:14px;line-height:14px;color:#000;left:79.00px;transform-origin:0 0;transform:scaleX(0.9600);">AAPOWERAID</div><div class="r" style="left:239px;width:183px;top:503px;height:19px;overflow:hidden;"><div class="t tx" style="left:0;top:3.15px;font-size:14px;line-height:14px;color:#000;transform-origin:0 0;transform:scaleX(1.02);">Poweraid 32 Oz - lot number tracked</div></div><div class="t" class="tx" style="top:506.15px;font-size:14px;line-height:14px;color:#000;left:425.30px;transform-origin:0 0;transform:scaleX(0.9341);">WHOLESALE</div><div class="t" class="tx" style="top:506.15px;font-size:14px;line-height:14px;color:#000;left:566.60px;transform-origin:0 0;transform:scaleX(0.9566);">PRODWHOLE</div><div class="t" class="nm" style="top:506.48px;font-size:14.2px;line-height:14.2px;color:#000;right:1125px;">0</div><div class="t" class="nm" style="top:506.48px;font-size:14.2px;line-height:14.2px;color:#000;right:1016px;">-</div><div class="t" class="nm" style="top:506.48px;font-size:14.2px;line-height:14.2px;color:#000;right:890px;">0</div><div class="t" class="nm" style="top:506.48px;font-size:14.2px;line-height:14.2px;color:#000;right:778px;">-</div><div class="t" class="nm" style="top:506.48px;font-size:14.2px;line-height:14.2px;color:#000;right:647px;">0</div><div class="t" class="nm" style="top:506.48px;font-size:14.2px;line-height:14.2px;color:#000;right:536px;">-</div><div class="t" class="nm" style="top:506.48px;font-size:14.2px;line-height:14.2px;color:#000;right:406px;">0</div><div class="t" class="nm" style="top:506.48px;font-size:14.2px;line-height:14.2px;color:#000;right:294px;">-</div><div class="t" class="nm" style="top:506.48px;font-size:14.2px;line-height:14.2px;color:#000;right:129px;">0.00</div><div class="r" style="left:77px;top:523px;width:159px;height:19px;background:#d9d9d9;"></div><div class="r" style="left:237px;top:523px;width:185px;height:19px;background:#d9d9d9;"></div><div class="r" style="left:423px;top:523px;width:140px;height:19px;background:#d9d9d9;"></div><div class="r" style="left:564px;top:523px;width:140px;height:19px;background:#d9d9d9;"></div><div class="r" style="left:705px;top:523px;width:92px;height:19px;background:#d9d9d9;"></div><div class="r" style="left:798px;top:523px;width:128px;height:19px;background:#d9d9d9;"></div><div class="r" style="left:927px;top:523px;width:105px;height:19px;background:#d9d9d9;"></div><div class="r" style="left:1033px;top:523px;width:131px;height:19px;background:#d9d9d9;"></div><div class="r" style="left:1165px;top:523px;width:110px;height:19px;background:#d9d9d9;"></div><div class="r" style="left:1276px;top:523px;width:130px;height:19px;background:#d9d9d9;"></div><div class="r" style="left:1407px;top:523px;width:109px;height:19px;background:#d9d9d9;"></div><div class="r" style="left:1517px;top:523px;width:131px;height:19px;background:#d9d9d9;"></div><div class="r" style="left:1649px;top:523px;width:144px;height:19px;background:#d9d9d9;"></div><div class="t" class="tx" style="top:526.15px;font-size:14px;line-height:14px;color:#000;left:79.00px;transform-origin:0 0;transform:scaleX(0.9600);">CONAIRT1</div><div class="r" style="left:239px;width:183px;top:523px;height:19px;overflow:hidden;"><div class="t tx" style="left:0;top:3.15px;font-size:14px;line-height:14px;color:#000;transform-origin:0 0;transform:scaleX(1.02);">Harvil 4 Foot Air Hockey Table</div></div><div class="t" class="tx" style="top:526.15px;font-size:14px;line-height:14px;color:#000;left:425.30px;transform-origin:0 0;transform:scaleX(0.9341);">WHOLESALE</div><div class="t" class="tx" style="top:526.15px;font-size:14px;line-height:14px;color:#000;left:566.60px;transform-origin:0 0;transform:scaleX(0.9566);">PRODWHOLE</div><div class="t" class="nm" style="top:526.48px;font-size:14.2px;line-height:14.2px;color:#000;right:1125px;">35</div><div class="t" class="nm" style="top:526.48px;font-size:14.2px;line-height:14.2px;color:#000;right:1000px;">3,172.75</div><div class="t" class="nm" style="top:526.48px;font-size:14.2px;line-height:14.2px;color:#000;right:890px;">0</div><div class="t" class="nm" style="top:526.48px;font-size:14.2px;line-height:14.2px;color:#000;right:778px;">-</div><div class="t" class="nm" style="top:526.48px;font-size:14.2px;line-height:14.2px;color:#000;right:647px;">0</div><div class="t" class="nm" style="top:526.48px;font-size:14.2px;line-height:14.2px;color:#000;right:536px;">-</div><div class="t" class="nm" style="top:526.48px;font-size:14.2px;line-height:14.2px;color:#000;right:406px;">35</div><div class="t" class="nm" style="top:526.48px;font-size:14.2px;line-height:14.2px;color:#000;right:278px;">3,172.75</div><div class="t" class="nm" style="top:526.48px;font-size:14.2px;line-height:14.2px;color:#000;right:129px;">0.00</div><div class="t" class="tx" style="top:546.15px;font-size:14px;line-height:14px;color:#000;left:79.00px;transform-origin:0 0;transform:scaleX(0.9600);">CONBABY1</div><div class="r" style="left:239px;width:183px;top:543px;height:19px;overflow:hidden;"><div class="t tx" style="left:0;top:3.15px;font-size:14px;line-height:14px;color:#000;transform-origin:0 0;transform:scaleX(1.02);">South Shore Savannah Changing Table</div></div><div class="t" class="tx" style="top:546.15px;font-size:14px;line-height:14px;color:#000;left:425.30px;transform-origin:0 0;transform:scaleX(0.9341);">WHOLESALE</div><div class="t" class="tx" style="top:546.15px;font-size:14px;line-height:14px;color:#000;left:566.60px;transform-origin:0 0;transform:scaleX(0.9566);">PRODWHOLE</div><div class="t" class="nm" style="top:546.48px;font-size:14.2px;line-height:14.2px;color:#000;right:1125px;">30</div><div class="t" class="nm" style="top:546.48px;font-size:14.2px;line-height:14.2px;color:#000;right:1000px;">3,214.26</div><div class="t" class="nm" style="top:546.48px;font-size:14.2px;line-height:14.2px;color:#000;right:890px;">9,050</div><div class="t" class="nm" style="top:546.48px;font-size:14.2px;line-height:14.2px;color:#000;right:762px;">969,164.50</div><div class="t" class="nm" style="top:546.48px;font-size:14.2px;line-height:14.2px;color:#000;right:647px;">7,790</div><div class="t" class="nm" style="top:546.48px;font-size:14.2px;line-height:14.2px;color:#000;right:520px;">834,232.65</div><div class="t" class="nm" style="top:546.48px;font-size:14.2px;line-height:14.2px;color:#000;right:406px;">1,290</div><div class="t" class="nm" style="top:546.48px;font-size:14.2px;line-height:14.2px;color:#000;right:278px;">138,146.11</div><div class="t" class="nm" style="top:546.48px;font-size:14.2px;line-height:14.2px;color:#000;right:129px;">11.80</div><div class="r" style="left:77px;top:563px;width:159px;height:19px;background:#d9d9d9;"></div><div class="r" style="left:237px;top:563px;width:185px;height:19px;background:#d9d9d9;"></div><div class="r" style="left:423px;top:563px;width:140px;height:19px;background:#d9d9d9;"></div><div class="r" style="left:564px;top:563px;width:140px;height:19px;background:#d9d9d9;"></div><div class="r" style="left:705px;top:563px;width:92px;height:19px;background:#d9d9d9;"></div><div class="r" style="left:798px;top:563px;width:128px;height:19px;background:#d9d9d9;"></div><div class="r" style="left:927px;top:563px;width:105px;height:19px;background:#d9d9d9;"></div><div class="r" style="left:1033px;top:563px;width:131px;height:19px;background:#d9d9d9;"></div><div class="r" style="left:1165px;top:563px;width:110px;height:19px;background:#d9d9d9;"></div><div class="r" style="left:1276px;top:563px;width:130px;height:19px;background:#d9d9d9;"></div><div class="r" style="left:1407px;top:563px;width:109px;height:19px;background:#d9d9d9;"></div><div class="r" style="left:1517px;top:563px;width:131px;height:19px;background:#d9d9d9;"></div><div class="r" style="left:1649px;top:563px;width:144px;height:19px;background:#d9d9d9;"></div><div class="t" class="tx" style="top:566.15px;font-size:14px;line-height:14px;color:#000;left:79.00px;transform-origin:0 0;transform:scaleX(0.9600);">CONBABY2</div><div class="r" style="left:239px;width:183px;top:563px;height:19px;overflow:hidden;"><div class="t tx" style="left:0;top:3.15px;font-size:14px;line-height:14px;color:#000;transform-origin:0 0;transform:scaleX(1.02);">Little Tikes Bold n Bright Table</div></div><div class="t" class="tx" style="top:566.15px;font-size:14px;line-height:14px;color:#000;left:425.30px;transform-origin:0 0;transform:scaleX(0.9341);">WHOLESALE</div><div class="t" class="tx" style="top:566.15px;font-size:14px;line-height:14px;color:#000;left:566.60px;transform-origin:0 0;transform:scaleX(0.9566);">PRODWHOLE</div><div class="t" class="nm" style="top:566.48px;font-size:14.2px;line-height:14.2px;color:#000;right:1125px;">86</div><div class="t" class="nm" style="top:566.48px;font-size:14.2px;line-height:14.2px;color:#000;right:1000px;">32,993.31</div><div class="t" class="nm" style="top:566.48px;font-size:14.2px;line-height:14.2px;color:#000;right:890px;">10,050</div><div class="t" class="nm" style="top:566.48px;font-size:14.2px;line-height:14.2px;color:#000;right:762px;">3,855,079.50</div><div class="t" class="nm" style="top:566.48px;font-size:14.2px;line-height:14.2px;color:#000;right:647px;">6,850</div><div class="t" class="nm" style="top:566.48px;font-size:14.2px;line-height:14.2px;color:#000;right:520px;">2,627,596.01</div><div class="t" class="nm" style="top:566.48px;font-size:14.2px;line-height:14.2px;color:#000;right:406px;">1,286</div><div class="t" class="nm" style="top:566.48px;font-size:14.2px;line-height:14.2px;color:#000;right:278px;">493,296.77</div><div class="t" class="nm" style="top:566.48px;font-size:14.2px;line-height:14.2px;color:#000;right:129px;">9.99</div><div class="t" class="tx" style="top:586.15px;font-size:14px;line-height:14px;color:#000;left:79.00px;transform-origin:0 0;transform:scaleX(0.9600);">CONBABY3</div><div class="r" style="left:239px;width:183px;top:583px;height:19px;overflow:hidden;"><div class="t tx" style="left:0;top:3.15px;font-size:14px;line-height:14px;color:#000;transform-origin:0 0;transform:scaleX(1.02);">Grac Pack N Play with Newborn</div></div><div class="t" class="tx" style="top:586.15px;font-size:14px;line-height:14px;color:#000;left:425.30px;transform-origin:0 0;transform:scaleX(0.9341);">WHOLESALE</div><div class="t" class="tx" style="top:586.15px;font-size:14px;line-height:14px;color:#000;left:566.60px;transform-origin:0 0;transform:scaleX(0.9566);">PRODWHOLE</div><div class="t" class="nm" style="top:586.48px;font-size:14.2px;line-height:14.2px;color:#000;right:1125px;">216</div><div class="t" class="nm" style="top:586.48px;font-size:14.2px;line-height:14.2px;color:#000;right:1000px;">24,353.98</div><div class="t" class="nm" style="top:586.48px;font-size:14.2px;line-height:14.2px;color:#000;right:890px;">8,550</div><div class="t" class="nm" style="top:586.48px;font-size:14.2px;line-height:14.2px;color:#000;right:762px;">963,585.00</div><div class="t" class="nm" style="top:586.48px;font-size:14.2px;line-height:14.2px;color:#000;right:647px;">6,720</div><div class="t" class="nm" style="top:586.48px;font-size:14.2px;line-height:14.2px;color:#000;right:520px;">757,354.66</div><div class="t" class="nm" style="top:586.48px;font-size:14.2px;line-height:14.2px;color:#000;right:406px;">2,046</div><div class="t" class="nm" style="top:586.48px;font-size:14.2px;line-height:14.2px;color:#000;right:278px;">230,584.32</div><div class="t" class="nm" style="top:586.48px;font-size:14.2px;line-height:14.2px;color:#000;right:129px;">5.94</div><div class="r" style="left:77px;top:603px;width:159px;height:19px;background:#d9d9d9;"></div><div class="r" style="left:237px;top:603px;width:185px;height:19px;background:#d9d9d9;"></div><div class="r" style="left:423px;top:603px;width:140px;height:19px;background:#d9d9d9;"></div><div class="r" style="left:564px;top:603px;width:140px;height:19px;background:#d9d9d9;"></div><div class="r" style="left:705px;top:603px;width:92px;height:19px;background:#d9d9d9;"></div><div class="r" style="left:798px;top:603px;width:128px;height:19px;background:#d9d9d9;"></div><div class="r" style="left:927px;top:603px;width:105px;height:19px;background:#d9d9d9;"></div><div class="r" style="left:1033px;top:603px;width:131px;height:19px;background:#d9d9d9;"></div><div class="r" style="left:1165px;top:603px;width:110px;height:19px;background:#d9d9d9;"></div><div class="r" style="left:1276px;top:603px;width:130px;height:19px;background:#d9d9d9;"></div><div class="r" style="left:1407px;top:603px;width:109px;height:19px;background:#d9d9d9;"></div><div class="r" style="left:1517px;top:603px;width:131px;height:19px;background:#d9d9d9;"></div><div class="r" style="left:1649px;top:603px;width:144px;height:19px;background:#d9d9d9;"></div><div class="t" class="tx" style="top:606.15px;font-size:14px;line-height:14px;color:#000;left:79.00px;transform-origin:0 0;transform:scaleX(0.9600);">CONBOTTLE1</div><div class="r" style="left:239px;width:183px;top:603px;height:19px;overflow:hidden;"><div class="t tx" style="left:0;top:3.15px;font-size:14px;line-height:14px;color:#000;transform-origin:0 0;transform:scaleX(1.02);">Eddy Insulated Bottle .5L</div></div><div class="t" class="tx" style="top:606.15px;font-size:14px;line-height:14px;color:#000;left:425.30px;transform-origin:0 0;transform:scaleX(0.9341);">WHOLESALE</div><div class="t" class="tx" style="top:606.15px;font-size:14px;line-height:14px;color:#000;left:566.60px;transform-origin:0 0;transform:scaleX(0.9566);">PRODWHOLE</div><div class="t" class="nm" style="top:606.48px;font-size:14.2px;line-height:14.2px;color:#000;right:1125px;">50</div><div class="t" class="nm" style="top:606.48px;font-size:14.2px;line-height:14.2px;color:#000;right:1000px;">885.64</div><div class="t" class="nm" style="top:606.48px;font-size:14.2px;line-height:14.2px;color:#000;right:890px;">11,200</div><div class="t" class="nm" style="top:606.48px;font-size:14.2px;line-height:14.2px;color:#000;right:762px;">197,904.00</div><div class="t" class="nm" style="top:606.48px;font-size:14.2px;line-height:14.2px;color:#000;right:647px;">9,900</div><div class="t" class="nm" style="top:606.48px;font-size:14.2px;line-height:14.2px;color:#000;right:520px;">174,935.13</div><div class="t" class="nm" style="top:606.48px;font-size:14.2px;line-height:14.2px;color:#000;right:406px;">1,350</div><div class="t" class="nm" style="top:606.48px;font-size:14.2px;line-height:14.2px;color:#000;right:278px;">23,854.51</div><div class="t" class="nm" style="top:606.48px;font-size:14.2px;line-height:14.2px;color:#000;right:129px;">14.14</div><div class="t" class="tx" style="top:626.15px;font-size:14px;line-height:14px;color:#000;left:79.00px;transform-origin:0 0;transform:scaleX(0.9600);">CONCHAIR1</div><div class="r" style="left:239px;width:183px;top:623px;height:19px;overflow:hidden;"><div class="t tx" style="left:0;top:3.15px;font-size:14px;line-height:14px;color:#000;transform-origin:0 0;transform:scaleX(1.02);">Caravan Canopy Recliner</div></div><div class="t" class="tx" style="top:626.15px;font-size:14px;line-height:14px;color:#000;left:425.30px;transform-origin:0 0;transform:scaleX(0.9341);">WHOLESALE</div><div class="t" class="tx" style="top:626.15px;font-size:14px;line-height:14px;color:#000;left:566.60px;transform-origin:0 0;transform:scaleX(0.9566);">PRODWHOLE</div><div class="t" class="nm" style="top:626.48px;font-size:14.2px;line-height:14.2px;color:#000;right:1125px;">101</div><div class="t" class="nm" style="top:626.48px;font-size:14.2px;line-height:14.2px;color:#000;right:1000px;">4,788.71</div><div class="t" class="nm" style="top:626.48px;font-size:14.2px;line-height:14.2px;color:#000;right:890px;">6,750</div><div class="t" class="nm" style="top:626.48px;font-size:14.2px;line-height:14.2px;color:#000;right:762px;">310,297.50</div><div class="t" class="nm" style="top:626.48px;font-size:14.2px;line-height:14.2px;color:#000;right:647px;">5,310</div><div class="t" class="nm" style="top:626.48px;font-size:14.2px;line-height:14.2px;color:#000;right:520px;">244,245.76</div><div class="t" class="nm" style="top:626.48px;font-size:14.2px;line-height:14.2px;color:#000;right:406px;">1,541</div><div class="t" class="nm" style="top:626.48px;font-size:14.2px;line-height:14.2px;color:#000;right:278px;">70,840.45</div><div class="t" class="nm" style="top:626.48px;font-size:14.2px;line-height:14.2px;color:#000;right:129px;">6.46</div><div class="r" style="left:77px;top:643px;width:159px;height:19px;background:#d9d9d9;"></div><div class="r" style="left:237px;top:643px;width:185px;height:19px;background:#d9d9d9;"></div><div class="r" style="left:423px;top:643px;width:140px;height:19px;background:#d9d9d9;"></div><div class="r" style="left:564px;top:643px;width:140px;height:19px;background:#d9d9d9;"></div><div class="r" style="left:705px;top:643px;width:92px;height:19px;background:#d9d9d9;"></div><div class="r" style="left:798px;top:643px;width:128px;height:19px;background:#d9d9d9;"></div><div class="r" style="left:927px;top:643px;width:105px;height:19px;background:#d9d9d9;"></div><div class="r" style="left:1033px;top:643px;width:131px;height:19px;background:#d9d9d9;"></div><div class="r" style="left:1165px;top:643px;width:110px;height:19px;background:#d9d9d9;"></div><div class="r" style="left:1276px;top:643px;width:130px;height:19px;background:#d9d9d9;"></div><div class="r" style="left:1407px;top:643px;width:109px;height:19px;background:#d9d9d9;"></div><div class="r" style="left:1517px;top:643px;width:131px;height:19px;background:#d9d9d9;"></div><div class="r" style="left:1649px;top:643px;width:144px;height:19px;background:#d9d9d9;"></div><div class="t" class="tx" style="top:646.15px;font-size:14px;line-height:14px;color:#000;left:79.00px;transform-origin:0 0;transform:scaleX(0.9600);">CONCRIB01</div><div class="r" style="left:239px;width:183px;top:643px;height:19px;overflow:hidden;"><div class="t tx" style="left:0;top:3.15px;font-size:14px;line-height:14px;color:#000;transform-origin:0 0;transform:scaleX(1.02);">Davinci Jayden Convertible Crib</div></div><div class="t" class="tx" style="top:646.15px;font-size:14px;line-height:14px;color:#000;left:425.30px;transform-origin:0 0;transform:scaleX(0.9341);">WHOLESALE</div><div class="t" class="tx" style="top:646.15px;font-size:14px;line-height:14px;color:#000;left:566.60px;transform-origin:0 0;transform:scaleX(0.9566);">PRODWHOLE</div><div class="t" class="nm" style="top:646.48px;font-size:14.2px;line-height:14.2px;color:#000;right:1125px;">176</div><div class="t" class="nm" style="top:646.48px;font-size:14.2px;line-height:14.2px;color:#000;right:1000px;">30,800.00</div><div class="t" class="nm" style="top:646.48px;font-size:14.2px;line-height:14.2px;color:#000;right:890px;">0</div><div class="t" class="nm" style="top:646.48px;font-size:14.2px;line-height:14.2px;color:#000;right:778px;">-</div><div class="t" class="nm" style="top:646.48px;font-size:14.2px;line-height:14.2px;color:#000;right:647px;">0</div><div class="t" class="nm" style="top:646.48px;font-size:14.2px;line-height:14.2px;color:#000;right:536px;">-</div><div class="t" class="nm" style="top:646.48px;font-size:14.2px;line-height:14.2px;color:#000;right:406px;">176</div><div class="t" class="nm" style="top:646.48px;font-size:14.2px;line-height:14.2px;color:#000;right:278px;">30,800.00</div><div class="t" class="nm" style="top:646.48px;font-size:14.2px;line-height:14.2px;color:#000;right:129px;">0.00</div><div class="t" class="tx" style="top:666.15px;font-size:14px;line-height:14px;color:#000;left:79.00px;transform-origin:0 0;transform:scaleX(0.9600);">CONCRIB02</div><div class="r" style="left:239px;width:183px;top:663px;height:19px;overflow:hidden;"><div class="t tx" style="left:0;top:3.15px;font-size:14px;line-height:14px;color:#000;transform-origin:0 0;transform:scaleX(1.02);">Graco Stylus Classic Travel System</div></div><div class="t" class="tx" style="top:666.15px;font-size:14px;line-height:14px;color:#000;left:425.30px;transform-origin:0 0;transform:scaleX(0.9341);">WHOLESALE</div><div class="t" class="tx" style="top:666.15px;font-size:14px;line-height:14px;color:#000;left:566.60px;transform-origin:0 0;transform:scaleX(0.9566);">PRODWHOLE</div><div class="t" class="nm" style="top:666.48px;font-size:14.2px;line-height:14.2px;color:#000;right:1125px;">90</div><div class="t" class="nm" style="top:666.48px;font-size:14.2px;line-height:14.2px;color:#000;right:1000px;">14,400.00</div><div class="t" class="nm" style="top:666.48px;font-size:14.2px;line-height:14.2px;color:#000;right:890px;">0</div><div class="t" class="nm" style="top:666.48px;font-size:14.2px;line-height:14.2px;color:#000;right:778px;">-</div><div class="t" class="nm" style="top:666.48px;font-size:14.2px;line-height:14.2px;color:#000;right:647px;">0</div><div class="t" class="nm" style="top:666.48px;font-size:14.2px;line-height:14.2px;color:#000;right:536px;">-</div><div class="t" class="nm" style="top:666.48px;font-size:14.2px;line-height:14.2px;color:#000;right:406px;">90</div><div class="t" class="nm" style="top:666.48px;font-size:14.2px;line-height:14.2px;color:#000;right:278px;">14,400.00</div><div class="t" class="nm" style="top:666.48px;font-size:14.2px;line-height:14.2px;color:#000;right:129px;">0.00</div><div class="r" style="left:77px;top:683px;width:159px;height:19px;background:#d9d9d9;"></div><div class="r" style="left:237px;top:683px;width:185px;height:19px;background:#d9d9d9;"></div><div class="r" style="left:423px;top:683px;width:140px;height:19px;background:#d9d9d9;"></div><div class="r" style="left:564px;top:683px;width:140px;height:19px;background:#d9d9d9;"></div><div class="r" style="left:705px;top:683px;width:92px;height:19px;background:#d9d9d9;"></div><div class="r" style="left:798px;top:683px;width:128px;height:19px;background:#d9d9d9;"></div><div class="r" style="left:927px;top:683px;width:105px;height:19px;background:#d9d9d9;"></div><div class="r" style="left:1033px;top:683px;width:131px;height:19px;background:#d9d9d9;"></div><div class="r" style="left:1165px;top:683px;width:110px;height:19px;background:#d9d9d9;"></div><div class="r" style="left:1276px;top:683px;width:130px;height:19px;background:#d9d9d9;"></div><div class="r" style="left:1407px;top:683px;width:109px;height:19px;background:#d9d9d9;"></div><div class="r" style="left:1517px;top:683px;width:131px;height:19px;background:#d9d9d9;"></div><div class="r" style="left:1649px;top:683px;width:144px;height:19px;background:#d9d9d9;"></div><div class="t" class="tx" style="top:686.15px;font-size:14px;line-height:14px;color:#000;left:79.00px;transform-origin:0 0;transform:scaleX(0.9600);">CONGRILL</div><div class="r" style="left:239px;width:183px;top:683px;height:19px;overflow:hidden;"><div class="t tx" style="left:0;top:3.15px;font-size:14px;line-height:14px;color:#000;transform-origin:0 0;transform:scaleX(1.02);">Char-Broil Classic 480</div></div><div class="t" class="tx" style="top:686.15px;font-size:14px;line-height:14px;color:#000;left:425.30px;transform-origin:0 0;transform:scaleX(0.9341);">WHOLESALE</div><div class="t" class="tx" style="top:686.15px;font-size:14px;line-height:14px;color:#000;left:566.60px;transform-origin:0 0;transform:scaleX(0.9566);">PRODWHOLE</div><div class="t" class="nm" style="top:686.48px;font-size:14.2px;line-height:14.2px;color:#000;right:1125px;">33</div><div class="t" class="nm" style="top:686.48px;font-size:14.2px;line-height:14.2px;color:#000;right:1000px;">4,619.67</div><div class="t" class="nm" style="top:686.48px;font-size:14.2px;line-height:14.2px;color:#000;right:890px;">1,900</div><div class="t" class="nm" style="top:686.48px;font-size:14.2px;line-height:14.2px;color:#000;right:762px;">265,981.00</div><div class="t" class="nm" style="top:686.48px;font-size:14.2px;line-height:14.2px;color:#000;right:647px;">1,710</div><div class="t" class="nm" style="top:686.48px;font-size:14.2px;line-height:14.2px;color:#000;right:520px;">239,382.90</div><div class="t" class="nm" style="top:686.48px;font-size:14.2px;line-height:14.2px;color:#000;right:406px;">223</div><div class="t" class="nm" style="top:686.48px;font-size:14.2px;line-height:14.2px;color:#000;right:278px;">31,217.77</div><div class="t" class="nm" style="top:686.48px;font-size:14.2px;line-height:14.2px;color:#000;right:129px;">13.36</div><div class="t" class="tx" style="top:706.15px;font-size:14px;line-height:14px;color:#000;left:79.00px;transform-origin:0 0;transform:scaleX(0.9600);">CONGRILLT</div><div class="r" style="left:239px;width:183px;top:703px;height:19px;overflow:hidden;"><div class="t tx" style="left:0;top:3.15px;font-size:14px;line-height:14px;color:#000;transform-origin:0 0;transform:scaleX(1.02);">Mr BBQ 18 PC Stainless Set &amp; Case</div></div><div class="t" class="tx" style="top:706.15px;font-size:14px;line-height:14px;color:#000;left:425.30px;transform-origin:0 0;transform:scaleX(0.9341);">WHOLESALE</div><div class="t" class="tx" style="top:706.15px;font-size:14px;line-height:14px;color:#000;left:566.60px;transform-origin:0 0;transform:scaleX(0.9566);">PRODWHOLE</div><div class="t" class="nm" style="top:706.48px;font-size:14.2px;line-height:14.2px;color:#000;right:1125px;">33</div><div class="t" class="nm" style="top:706.48px;font-size:14.2px;line-height:14.2px;color:#000;right:1000px;">507.87</div><div class="t" class="nm" style="top:706.48px;font-size:14.2px;line-height:14.2px;color:#000;right:890px;">1,900</div><div class="t" class="nm" style="top:706.48px;font-size:14.2px;line-height:14.2px;color:#000;right:762px;">29,241.00</div><div class="t" class="nm" style="top:706.48px;font-size:14.2px;line-height:14.2px;color:#000;right:647px;">1,710</div><div class="t" class="nm" style="top:706.48px;font-size:14.2px;line-height:14.2px;color:#000;right:520px;">26,316.90</div><div class="t" class="nm" style="top:706.48px;font-size:14.2px;line-height:14.2px;color:#000;right:406px;">223</div><div class="t" class="nm" style="top:706.48px;font-size:14.2px;line-height:14.2px;color:#000;right:278px;">3,431.97</div><div class="t" class="nm" style="top:706.48px;font-size:14.2px;line-height:14.2px;color:#000;right:129px;">13.36</div><div class="r" style="left:77px;top:723px;width:159px;height:19px;background:#d9d9d9;"></div><div class="r" style="left:237px;top:723px;width:185px;height:19px;background:#d9d9d9;"></div><div class="r" style="left:423px;top:723px;width:140px;height:19px;background:#d9d9d9;"></div><div class="r" style="left:564px;top:723px;width:140px;height:19px;background:#d9d9d9;"></div><div class="r" style="left:705px;top:723px;width:92px;height:19px;background:#d9d9d9;"></div><div class="r" style="left:798px;top:723px;width:128px;height:19px;background:#d9d9d9;"></div><div class="r" style="left:927px;top:723px;width:105px;height:19px;background:#d9d9d9;"></div><div class="r" style="left:1033px;top:723px;width:131px;height:19px;background:#d9d9d9;"></div><div class="r" style="left:1165px;top:723px;width:110px;height:19px;background:#d9d9d9;"></div><div class="r" style="left:1276px;top:723px;width:130px;height:19px;background:#d9d9d9;"></div><div class="r" style="left:1407px;top:723px;width:109px;height:19px;background:#d9d9d9;"></div><div class="r" style="left:1517px;top:723px;width:131px;height:19px;background:#d9d9d9;"></div><div class="r" style="left:1649px;top:723px;width:144px;height:19px;background:#d9d9d9;"></div><div class="t" class="tx" style="top:726.15px;font-size:14px;line-height:14px;color:#000;left:79.00px;transform-origin:0 0;transform:scaleX(0.9600);">CONHEARTM1</div><div class="r" style="left:239px;width:183px;top:723px;height:19px;overflow:hidden;"><div class="t tx" style="left:0;top:3.15px;font-size:14px;line-height:14px;color:#000;transform-origin:0 0;transform:scaleX(1.02);">Polar Heart Rate Monitor</div></div><div class="t" class="tx" style="top:726.15px;font-size:14px;line-height:14px;color:#000;left:425.30px;transform-origin:0 0;transform:scaleX(0.9341);">WHOLESALE</div><div class="t" class="tx" style="top:726.15px;font-size:14px;line-height:14px;color:#000;left:566.60px;transform-origin:0 0;transform:scaleX(0.9566);">PRODWHOLE</div><div class="t" class="nm" style="top:726.48px;font-size:14.2px;line-height:14.2px;color:#000;right:1125px;">200</div><div class="t" class="nm" style="top:726.48px;font-size:14.2px;line-height:14.2px;color:#000;right:1000px;">8,790.13</div><div class="t" class="nm" style="top:726.48px;font-size:14.2px;line-height:14.2px;color:#000;right:890px;">24,120</div><div class="t" class="nm" style="top:726.48px;font-size:14.2px;line-height:14.2px;color:#000;right:762px;">1,060,074.00</div><div class="t" class="nm" style="top:726.48px;font-size:14.2px;line-height:14.2px;color:#000;right:647px;">24,320</div><div class="t" class="nm" style="top:726.48px;font-size:14.2px;line-height:14.2px;color:#000;right:520px;">1,068,864.13</div><div class="t" class="nm" style="top:726.48px;font-size:14.2px;line-height:14.2px;color:#000;right:406px;">0</div><div class="t" class="nm" style="top:726.48px;font-size:14.2px;line-height:14.2px;color:#000;right:294px;">-</div><div class="t" class="nm" style="top:726.48px;font-size:14.2px;line-height:14.2px;color:#000;right:129px;">243.20</div><div class="t" class="tx" style="top:746.15px;font-size:14px;line-height:14px;color:#000;left:79.00px;transform-origin:0 0;transform:scaleX(0.9600);">CONKID1</div><div class="r" style="left:239px;width:183px;top:743px;height:19px;overflow:hidden;"><div class="t tx" style="left:0;top:3.15px;font-size:14px;line-height:14px;color:#000;transform-origin:0 0;transform:scaleX(1.02);">Kiddraft Nantucket Toybox</div></div><div class="t" class="tx" style="top:746.15px;font-size:14px;line-height:14px;color:#000;left:425.30px;transform-origin:0 0;transform:scaleX(0.9341);">WHOLESALE</div><div class="t" class="tx" style="top:746.15px;font-size:14px;line-height:14px;color:#000;left:566.60px;transform-origin:0 0;transform:scaleX(0.9566);">PRODWHOLE</div><div class="t" class="nm" style="top:746.48px;font-size:14.2px;line-height:14.2px;color:#000;right:1125px;">318</div><div class="t" class="nm" style="top:746.48px;font-size:14.2px;line-height:14.2px;color:#000;right:1000px;">23,508.11</div><div class="t" class="nm" style="top:746.48px;font-size:14.2px;line-height:14.2px;color:#000;right:890px;">1,682</div><div class="t" class="nm" style="top:746.48px;font-size:14.2px;line-height:14.2px;color:#000;right:762px;">124,282.98</div><div class="t" class="nm" style="top:746.48px;font-size:14.2px;line-height:14.2px;color:#000;right:647px;">2,000</div><div class="t" class="nm" style="top:746.48px;font-size:14.2px;line-height:14.2px;color:#000;right:520px;">148,212.64</div><div class="t" class="nm" style="top:746.48px;font-size:14.2px;line-height:14.2px;color:#000;right:406px;">0</div><div class="t" class="nm" style="top:746.48px;font-size:14.2px;line-height:14.2px;color:#000;right:294px;">-</div><div class="t" class="nm" style="top:746.48px;font-size:14.2px;line-height:14.2px;color:#000;right:129px;">12.61</div><div class="r" style="left:77px;top:763px;width:159px;height:19px;background:#d9d9d9;"></div><div class="r" style="left:237px;top:763px;width:185px;height:19px;background:#d9d9d9;"></div><div class="r" style="left:423px;top:763px;width:140px;height:19px;background:#d9d9d9;"></div><div class="r" style="left:564px;top:763px;width:140px;height:19px;background:#d9d9d9;"></div><div class="r" style="left:705px;top:763px;width:92px;height:19px;background:#d9d9d9;"></div><div class="r" style="left:798px;top:763px;width:128px;height:19px;background:#d9d9d9;"></div><div class="r" style="left:927px;top:763px;width:105px;height:19px;background:#d9d9d9;"></div><div class="r" style="left:1033px;top:763px;width:131px;height:19px;background:#d9d9d9;"></div><div class="r" style="left:1165px;top:763px;width:110px;height:19px;background:#d9d9d9;"></div><div class="r" style="left:1276px;top:763px;width:130px;height:19px;background:#d9d9d9;"></div><div class="r" style="left:1407px;top:763px;width:109px;height:19px;background:#d9d9d9;"></div><div class="r" style="left:1517px;top:763px;width:131px;height:19px;background:#d9d9d9;"></div><div class="r" style="left:1649px;top:763px;width:144px;height:19px;background:#d9d9d9;"></div><div class="t" class="tx" style="top:766.15px;font-size:14px;line-height:14px;color:#000;left:79.00px;transform-origin:0 0;transform:scaleX(0.9600);">CONKID2</div><div class="r" style="left:239px;width:183px;top:763px;height:19px;overflow:hidden;"><div class="t tx" style="left:0;top:3.15px;font-size:14px;line-height:14px;color:#000;transform-origin:0 0;transform:scaleX(1.02);">Radio Flyer Interactive Riding Horse</div></div><div class="t" class="tx" style="top:766.15px;font-size:14px;line-height:14px;color:#000;left:425.30px;transform-origin:0 0;transform:scaleX(0.9341);">WHOLESALE</div><div class="t" class="tx" style="top:766.15px;font-size:14px;line-height:14px;color:#000;left:566.60px;transform-origin:0 0;transform:scaleX(0.9566);">PRODWHOLE</div><div class="t" class="nm" style="top:766.48px;font-size:14.2px;line-height:14.2px;color:#000;right:1125px;">310</div><div class="t" class="nm" style="top:766.48px;font-size:14.2px;line-height:14.2px;color:#000;right:1000px;">35,957.13</div><div class="t" class="nm" style="top:766.48px;font-size:14.2px;line-height:14.2px;color:#000;right:890px;">1,640</div><div class="t" class="nm" style="top:766.48px;font-size:14.2px;line-height:14.2px;color:#000;right:762px;">190,207.20</div><div class="t" class="nm" style="top:766.48px;font-size:14.2px;line-height:14.2px;color:#000;right:647px;">1,950</div><div class="t" class="nm" style="top:766.48px;font-size:14.2px;line-height:14.2px;color:#000;right:520px;">226,415.72</div><div class="t" class="nm" style="top:766.48px;font-size:14.2px;line-height:14.2px;color:#000;right:406px;">0</div><div class="t" class="nm" style="top:766.48px;font-size:14.2px;line-height:14.2px;color:#000;right:294px;">-</div><div class="t" class="nm" style="top:766.48px;font-size:14.2px;line-height:14.2px;color:#000;right:129px;">12.59</div><div class="t" class="tx" style="top:786.15px;font-size:14px;line-height:14px;color:#000;left:79.00px;transform-origin:0 0;transform:scaleX(0.9600);">CONMITT</div><div class="r" style="left:239px;width:183px;top:783px;height:19px;overflow:hidden;"><div class="t tx" style="left:0;top:3.15px;font-size:14px;line-height:14px;color:#000;transform-origin:0 0;transform:scaleX(1.02);">Mizuno Fielders Baseball Mitt</div></div><div class="t" class="tx" style="top:786.15px;font-size:14px;line-height:14px;color:#000;left:425.30px;transform-origin:0 0;transform:scaleX(0.9341);">WHOLESALE</div><div class="t" class="tx" style="top:786.15px;font-size:14px;line-height:14px;color:#000;left:566.60px;transform-origin:0 0;transform:scaleX(0.9566);">PRODWHOLE</div><div class="t" class="nm" style="top:786.48px;font-size:14.2px;line-height:14.2px;color:#000;right:1125px;">225</div><div class="t" class="nm" style="top:786.48px;font-size:14.2px;line-height:14.2px;color:#000;right:1000px;">15,360.51</div><div class="t" class="nm" style="top:786.48px;font-size:14.2px;line-height:14.2px;color:#000;right:890px;">5,135</div><div class="t" class="nm" style="top:786.48px;font-size:14.2px;line-height:14.2px;color:#000;right:762px;">348,255.70</div><div class="t" class="nm" style="top:786.48px;font-size:14.2px;line-height:14.2px;color:#000;right:647px;">5,360</div><div class="t" class="nm" style="top:786.48px;font-size:14.2px;line-height:14.2px;color:#000;right:520px;">363,648.23</div><div class="t" class="nm" style="top:786.48px;font-size:14.2px;line-height:14.2px;color:#000;right:406px;">0</div><div class="t" class="nm" style="top:786.48px;font-size:14.2px;line-height:14.2px;color:#000;right:294px;">-</div><div class="t" class="nm" style="top:786.48px;font-size:14.2px;line-height:14.2px;color:#000;right:129px;">47.35</div><div class="r" style="left:77px;top:803px;width:159px;height:19px;background:#d9d9d9;"></div><div class="r" style="left:237px;top:803px;width:185px;height:19px;background:#d9d9d9;"></div><div class="r" style="left:423px;top:803px;width:140px;height:19px;background:#d9d9d9;"></div><div class="r" style="left:564px;top:803px;width:140px;height:19px;background:#d9d9d9;"></div><div class="r" style="left:705px;top:803px;width:92px;height:19px;background:#d9d9d9;"></div><div class="r" style="left:798px;top:803px;width:128px;height:19px;background:#d9d9d9;"></div><div class="r" style="left:927px;top:803px;width:105px;height:19px;background:#d9d9d9;"></div><div class="r" style="left:1033px;top:803px;width:131px;height:19px;background:#d9d9d9;"></div><div class="r" style="left:1165px;top:803px;width:110px;height:19px;background:#d9d9d9;"></div><div class="r" style="left:1276px;top:803px;width:130px;height:19px;background:#d9d9d9;"></div><div class="r" style="left:1407px;top:803px;width:109px;height:19px;background:#d9d9d9;"></div><div class="r" style="left:1517px;top:803px;width:131px;height:19px;background:#d9d9d9;"></div><div class="r" style="left:1649px;top:803px;width:144px;height:19px;background:#d9d9d9;"></div><div class="t" class="tx" style="top:806.15px;font-size:14px;line-height:14px;color:#000;left:79.00px;transform-origin:0 0;transform:scaleX(0.9600);">CONPAPERA4</div><div class="r" style="left:239px;width:183px;top:803px;height:19px;overflow:hidden;"><div class="t tx" style="left:0;top:3.15px;font-size:14px;line-height:14px;color:#000;transform-origin:0 0;transform:scaleX(1.02);">Letter Paper Ream A4</div></div><div class="t" class="tx" style="top:806.15px;font-size:14px;line-height:14px;color:#000;left:425.30px;transform-origin:0 0;transform:scaleX(0.9341);">WHOLESALE</div><div class="t" class="tx" style="top:806.15px;font-size:14px;line-height:14px;color:#000;left:566.60px;transform-origin:0 0;transform:scaleX(0.9566);">PRODWHOLE</div><div class="t" class="nm" style="top:806.48px;font-size:14.2px;line-height:14.2px;color:#000;right:1125px;">200</div><div class="t" class="nm" style="top:806.48px;font-size:14.2px;line-height:14.2px;color:#000;right:1000px;">600.00</div><div class="t" class="nm" style="top:806.48px;font-size:14.2px;line-height:14.2px;color:#000;right:890px;">0</div><div class="t" class="nm" style="top:806.48px;font-size:14.2px;line-height:14.2px;color:#000;right:778px;">-</div><div class="t" class="nm" style="top:806.48px;font-size:14.2px;line-height:14.2px;color:#000;right:647px;">0</div><div class="t" class="nm" style="top:806.48px;font-size:14.2px;line-height:14.2px;color:#000;right:536px;">-</div><div class="t" class="nm" style="top:806.48px;font-size:14.2px;line-height:14.2px;color:#000;right:406px;">200</div><div class="t" class="nm" style="top:806.48px;font-size:14.2px;line-height:14.2px;color:#000;right:278px;">600.00</div><div class="t" class="nm" style="top:806.48px;font-size:14.2px;line-height:14.2px;color:#000;right:129px;">0.00</div><div class="t" class="tx" style="top:826.15px;font-size:14px;line-height:14px;color:#000;left:79.00px;transform-origin:0 0;transform:scaleX(0.9600);">CONPAPERST</div><div class="r" style="left:239px;width:183px;top:823px;height:19px;overflow:hidden;"><div class="t tx" style="left:0;top:3.15px;font-size:14px;line-height:14px;color:#000;transform-origin:0 0;transform:scaleX(1.02);">Letter Paper Ream Standard</div></div><div class="t" class="tx" style="top:826.15px;font-size:14px;line-height:14px;color:#000;left:425.30px;transform-origin:0 0;transform:scaleX(0.9341);">WHOLESALE</div><div class="t" class="tx" style="top:826.15px;font-size:14px;line-height:14px;color:#000;left:566.60px;transform-origin:0 0;transform:scaleX(0.9566);">PRODWHOLE</div><div class="t" class="nm" style="top:826.48px;font-size:14.2px;line-height:14.2px;color:#000;right:1125px;">200</div><div class="t" class="nm" style="top:826.48px;font-size:14.2px;line-height:14.2px;color:#000;right:1000px;">600.00</div><div class="t" class="nm" style="top:826.48px;font-size:14.2px;line-height:14.2px;color:#000;right:890px;">0</div><div class="t" class="nm" style="top:826.48px;font-size:14.2px;line-height:14.2px;color:#000;right:778px;">-</div><div class="t" class="nm" style="top:826.48px;font-size:14.2px;line-height:14.2px;color:#000;right:647px;">0</div><div class="t" class="nm" style="top:826.48px;font-size:14.2px;line-height:14.2px;color:#000;right:536px;">-</div><div class="t" class="nm" style="top:826.48px;font-size:14.2px;line-height:14.2px;color:#000;right:406px;">200</div><div class="t" class="nm" style="top:826.48px;font-size:14.2px;line-height:14.2px;color:#000;right:278px;">600.00</div><div class="t" class="nm" style="top:826.48px;font-size:14.2px;line-height:14.2px;color:#000;right:129px;">0.00</div><div class="r" style="left:77px;top:843px;width:159px;height:19px;background:#d9d9d9;"></div><div class="r" style="left:237px;top:843px;width:185px;height:19px;background:#d9d9d9;"></div><div class="r" style="left:423px;top:843px;width:140px;height:19px;background:#d9d9d9;"></div><div class="r" style="left:564px;top:843px;width:140px;height:19px;background:#d9d9d9;"></div><div class="r" style="left:705px;top:843px;width:92px;height:19px;background:#d9d9d9;"></div><div class="r" style="left:798px;top:843px;width:128px;height:19px;background:#d9d9d9;"></div><div class="r" style="left:927px;top:843px;width:105px;height:19px;background:#d9d9d9;"></div><div class="r" style="left:1033px;top:843px;width:131px;height:19px;background:#d9d9d9;"></div><div class="r" style="left:1165px;top:843px;width:110px;height:19px;background:#d9d9d9;"></div><div class="r" style="left:1276px;top:843px;width:130px;height:19px;background:#d9d9d9;"></div><div class="r" style="left:1407px;top:843px;width:109px;height:19px;background:#d9d9d9;"></div><div class="r" style="left:1517px;top:843px;width:131px;height:19px;background:#d9d9d9;"></div><div class="r" style="left:1649px;top:843px;width:144px;height:19px;background:#d9d9d9;"></div><div class="t" class="tx" style="top:846.15px;font-size:14px;line-height:14px;color:#000;left:79.00px;transform-origin:0 0;transform:scaleX(0.9600);">CONPEN100</div><div class="r" style="left:239px;width:183px;top:843px;height:19px;overflow:hidden;"><div class="t tx" style="left:0;top:3.15px;font-size:14px;line-height:14px;color:#000;transform-origin:0 0;transform:scaleX(1.02);">Pens - Box of 100</div></div><div class="t" class="tx" style="top:846.15px;font-size:14px;line-height:14px;color:#000;left:425.30px;transform-origin:0 0;transform:scaleX(0.9341);">WHOLESALE</div><div class="t" class="tx" style="top:846.15px;font-size:14px;line-height:14px;color:#000;left:566.60px;transform-origin:0 0;transform:scaleX(0.9566);">PRODWHOLE</div><div class="t" class="nm" style="top:846.48px;font-size:14.2px;line-height:14.2px;color:#000;right:1125px;">200</div><div class="t" class="nm" style="top:846.48px;font-size:14.2px;line-height:14.2px;color:#000;right:1000px;">2,000.00</div><div class="t" class="nm" style="top:846.48px;font-size:14.2px;line-height:14.2px;color:#000;right:890px;">0</div><div class="t" class="nm" style="top:846.48px;font-size:14.2px;line-height:14.2px;color:#000;right:778px;">-</div><div class="t" class="nm" style="top:846.48px;font-size:14.2px;line-height:14.2px;color:#000;right:647px;">0</div><div class="t" class="nm" style="top:846.48px;font-size:14.2px;line-height:14.2px;color:#000;right:536px;">-</div><div class="t" class="nm" style="top:846.48px;font-size:14.2px;line-height:14.2px;color:#000;right:406px;">200</div><div class="t" class="nm" style="top:846.48px;font-size:14.2px;line-height:14.2px;color:#000;right:278px;">2,000.00</div><div class="t" class="nm" style="top:846.48px;font-size:14.2px;line-height:14.2px;color:#000;right:129px;">0.00</div><div class="t" class="tx" style="top:866.15px;font-size:14px;line-height:14px;color:#000;left:79.00px;transform-origin:0 0;transform:scaleX(0.9600);">CONPENC100</div><div class="r" style="left:239px;width:183px;top:863px;height:19px;overflow:hidden;"><div class="t tx" style="left:0;top:3.15px;font-size:14px;line-height:14px;color:#000;transform-origin:0 0;transform:scaleX(1.02);">Pencils - Box of 100</div></div><div class="t" class="tx" style="top:866.15px;font-size:14px;line-height:14px;color:#000;left:425.30px;transform-origin:0 0;transform:scaleX(0.9341);">WHOLESALE</div><div class="t" class="tx" style="top:866.15px;font-size:14px;line-height:14px;color:#000;left:566.60px;transform-origin:0 0;transform:scaleX(0.9566);">PRODWHOLE</div><div class="t" class="nm" style="top:866.48px;font-size:14.2px;line-height:14.2px;color:#000;right:1125px;">200</div><div class="t" class="nm" style="top:866.48px;font-size:14.2px;line-height:14.2px;color:#000;right:1000px;">3,000.00</div><div class="t" class="nm" style="top:866.48px;font-size:14.2px;line-height:14.2px;color:#000;right:890px;">0</div><div class="t" class="nm" style="top:866.48px;font-size:14.2px;line-height:14.2px;color:#000;right:778px;">-</div><div class="t" class="nm" style="top:866.48px;font-size:14.2px;line-height:14.2px;color:#000;right:647px;">0</div><div class="t" class="nm" style="top:866.48px;font-size:14.2px;line-height:14.2px;color:#000;right:536px;">-</div><div class="t" class="nm" style="top:866.48px;font-size:14.2px;line-height:14.2px;color:#000;right:406px;">200</div><div class="t" class="nm" style="top:866.48px;font-size:14.2px;line-height:14.2px;color:#000;right:278px;">3,000.00</div><div class="t" class="nm" style="top:866.48px;font-size:14.2px;line-height:14.2px;color:#000;right:129px;">0.00</div><div class="r" style="left:77px;top:883px;width:159px;height:19px;background:#d9d9d9;"></div><div class="r" style="left:237px;top:883px;width:185px;height:19px;background:#d9d9d9;"></div><div class="r" style="left:423px;top:883px;width:140px;height:19px;background:#d9d9d9;"></div><div class="r" style="left:564px;top:883px;width:140px;height:19px;background:#d9d9d9;"></div><div class="r" style="left:705px;top:883px;width:92px;height:19px;background:#d9d9d9;"></div><div class="r" style="left:798px;top:883px;width:128px;height:19px;background:#d9d9d9;"></div><div class="r" style="left:927px;top:883px;width:105px;height:19px;background:#d9d9d9;"></div><div class="r" style="left:1033px;top:883px;width:131px;height:19px;background:#d9d9d9;"></div><div class="r" style="left:1165px;top:883px;width:110px;height:19px;background:#d9d9d9;"></div><div class="r" style="left:1276px;top:883px;width:130px;height:19px;background:#d9d9d9;"></div><div class="r" style="left:1407px;top:883px;width:109px;height:19px;background:#d9d9d9;"></div><div class="r" style="left:1517px;top:883px;width:131px;height:19px;background:#d9d9d9;"></div><div class="r" style="left:1649px;top:883px;width:144px;height:19px;background:#d9d9d9;"></div><div class="t" class="tx" style="top:886.15px;font-size:14px;line-height:14px;color:#000;left:79.00px;transform-origin:0 0;transform:scaleX(0.9600);">CONPOGO1</div><div class="r" style="left:239px;width:183px;top:883px;height:19px;overflow:hidden;"><div class="t tx" style="left:0;top:3.15px;font-size:14px;line-height:14px;color:#000;transform-origin:0 0;transform:scaleX(1.02);">Flybar Foam Pogo Stick</div></div><div class="t" class="tx" style="top:886.15px;font-size:14px;line-height:14px;color:#000;left:425.30px;transform-origin:0 0;transform:scaleX(0.9341);">WHOLESALE</div><div class="t" class="tx" style="top:886.15px;font-size:14px;line-height:14px;color:#000;left:566.60px;transform-origin:0 0;transform:scaleX(0.9566);">PRODWHOLE</div><div class="t" class="nm" style="top:886.48px;font-size:14.2px;line-height:14.2px;color:#000;right:1125px;">100</div><div class="t" class="nm" style="top:886.48px;font-size:14.2px;line-height:14.2px;color:#000;right:1000px;">3,807.33</div><div class="t" class="nm" style="top:886.48px;font-size:14.2px;line-height:14.2px;color:#000;right:890px;">0</div><div class="t" class="nm" style="top:886.48px;font-size:14.2px;line-height:14.2px;color:#000;right:778px;">-</div><div class="t" class="nm" style="top:886.48px;font-size:14.2px;line-height:14.2px;color:#000;right:647px;">0</div><div class="t" class="nm" style="top:886.48px;font-size:14.2px;line-height:14.2px;color:#000;right:536px;">-</div><div class="t" class="nm" style="top:886.48px;font-size:14.2px;line-height:14.2px;color:#000;right:406px;">100</div><div class="t" class="nm" style="top:886.48px;font-size:14.2px;line-height:14.2px;color:#000;right:278px;">3,807.33</div><div class="t" class="nm" style="top:886.48px;font-size:14.2px;line-height:14.2px;color:#000;right:129px;">0.00</div><div class="t" class="tx" style="top:906.15px;font-size:14px;line-height:14px;color:#000;left:79.00px;transform-origin:0 0;transform:scaleX(0.9600);">CONPOOL1</div><div class="r" style="left:239px;width:183px;top:903px;height:19px;overflow:hidden;"><div class="t tx" style="left:0;top:3.15px;font-size:14px;line-height:14px;color:#000;transform-origin:0 0;transform:scaleX(1.02);">Intex Rainbow Ring Pool</div></div><div class="t" class="tx" style="top:906.15px;font-size:14px;line-height:14px;color:#000;left:425.30px;transform-origin:0 0;transform:scaleX(0.9341);">WHOLESALE</div><div class="t" class="tx" style="top:906.15px;font-size:14px;line-height:14px;color:#000;left:566.60px;transform-origin:0 0;transform:scaleX(0.9566);">PRODWHOLE</div><div class="t" class="nm" style="top:906.48px;font-size:14.2px;line-height:14.2px;color:#000;right:1125px;">75</div><div class="t" class="nm" style="top:906.48px;font-size:14.2px;line-height:14.2px;color:#000;right:1000px;">4,021.86</div><div class="t" class="nm" style="top:906.48px;font-size:14.2px;line-height:14.2px;color:#000;right:890px;">0</div><div class="t" class="nm" style="top:906.48px;font-size:14.2px;line-height:14.2px;color:#000;right:778px;">-</div><div class="t" class="nm" style="top:906.48px;font-size:14.2px;line-height:14.2px;color:#000;right:647px;">0</div><div class="t" class="nm" style="top:906.48px;font-size:14.2px;line-height:14.2px;color:#000;right:536px;">-</div><div class="t" class="nm" style="top:906.48px;font-size:14.2px;line-height:14.2px;color:#000;right:406px;">75</div><div class="t" class="nm" style="top:906.48px;font-size:14.2px;line-height:14.2px;color:#000;right:278px;">4,021.86</div><div class="t" class="nm" style="top:906.48px;font-size:14.2px;line-height:14.2px;color:#000;right:129px;">0.00</div><div class="r" style="left:77px;top:923px;width:159px;height:19px;background:#d9d9d9;"></div><div class="r" style="left:237px;top:923px;width:185px;height:19px;background:#d9d9d9;"></div><div class="r" style="left:423px;top:923px;width:140px;height:19px;background:#d9d9d9;"></div><div class="r" style="left:564px;top:923px;width:140px;height:19px;background:#d9d9d9;"></div><div class="r" style="left:705px;top:923px;width:92px;height:19px;background:#d9d9d9;"></div><div class="r" style="left:798px;top:923px;width:128px;height:19px;background:#d9d9d9;"></div><div class="r" style="left:927px;top:923px;width:105px;height:19px;background:#d9d9d9;"></div><div class="r" style="left:1033px;top:923px;width:131px;height:19px;background:#d9d9d9;"></div><div class="r" style="left:1165px;top:923px;width:110px;height:19px;background:#d9d9d9;"></div><div class="r" style="left:1276px;top:923px;width:130px;height:19px;background:#d9d9d9;"></div><div class="r" style="left:1407px;top:923px;width:109px;height:19px;background:#d9d9d9;"></div><div class="r" style="left:1517px;top:923px;width:131px;height:19px;background:#d9d9d9;"></div><div class="r" style="left:1649px;top:923px;width:144px;height:19px;background:#d9d9d9;"></div><div class="t" class="tx" style="top:926.15px;font-size:14px;line-height:14px;color:#000;left:79.00px;transform-origin:0 0;transform:scaleX(0.9600);">CONTENBAL1</div><div class="r" style="left:239px;width:183px;top:923px;height:19px;overflow:hidden;"><div class="t tx" style="left:0;top:3.15px;font-size:14px;line-height:14px;color:#000;transform-origin:0 0;transform:scaleX(1.02);">Lobster Portable Tennis Ball Machine</div></div><div class="t" class="tx" style="top:926.15px;font-size:14px;line-height:14px;color:#000;left:425.30px;transform-origin:0 0;transform:scaleX(0.9341);">WHOLESALE</div><div class="t" class="tx" style="top:926.15px;font-size:14px;line-height:14px;color:#000;left:566.60px;transform-origin:0 0;transform:scaleX(0.9566);">PRODWHOLE</div><div class="t" class="nm" style="top:926.48px;font-size:14.2px;line-height:14.2px;color:#000;right:1125px;">6</div><div class="t" class="nm" style="top:926.48px;font-size:14.2px;line-height:14.2px;color:#000;right:1000px;">3,355.80</div><div class="t" class="nm" style="top:926.48px;font-size:14.2px;line-height:14.2px;color:#000;right:890px;">205</div><div class="t" class="nm" style="top:926.48px;font-size:14.2px;line-height:14.2px;color:#000;right:762px;">114,656.50</div><div class="t" class="nm" style="top:926.48px;font-size:14.2px;line-height:14.2px;color:#000;right:647px;">198</div><div class="t" class="nm" style="top:926.48px;font-size:14.2px;line-height:14.2px;color:#000;right:520px;">110,741.40</div><div class="t" class="nm" style="top:926.48px;font-size:14.2px;line-height:14.2px;color:#000;right:406px;">13</div><div class="t" class="nm" style="top:926.48px;font-size:14.2px;line-height:14.2px;color:#000;right:278px;">7,270.90</div><div class="t" class="nm" style="top:926.48px;font-size:14.2px;line-height:14.2px;color:#000;right:129px;">20.84</div><div class="t" class="tx" style="top:946.15px;font-size:14px;line-height:14px;color:#000;left:79.00px;transform-origin:0 0;transform:scaleX(0.9600);">CONTRAIN1</div><div class="r" style="left:239px;width:183px;top:943px;height:19px;overflow:hidden;"><div class="t tx" style="left:0;top:3.15px;font-size:14px;line-height:14px;color:#000;transform-origin:0 0;transform:scaleX(1.02);">Stamina In-Motion Elliptical Trainer</div></div><div class="t" class="tx" style="top:946.15px;font-size:14px;line-height:14px;color:#000;left:425.30px;transform-origin:0 0;transform:scaleX(0.9341);">WHOLESALE</div><div class="t" class="tx" style="top:946.15px;font-size:14px;line-height:14px;color:#000;left:566.60px;transform-origin:0 0;transform:scaleX(0.9566);">PRODWHOLE</div><div class="t" class="nm" style="top:946.48px;font-size:14.2px;line-height:14.2px;color:#000;right:1125px;">19</div><div class="t" class="nm" style="top:946.48px;font-size:14.2px;line-height:14.2px;color:#000;right:1000px;">1,183.70</div><div class="t" class="nm" style="top:946.48px;font-size:14.2px;line-height:14.2px;color:#000;right:890px;">205</div><div class="t" class="nm" style="top:946.48px;font-size:14.2px;line-height:14.2px;color:#000;right:762px;">12,771.50</div><div class="t" class="nm" style="top:946.48px;font-size:14.2px;line-height:14.2px;color:#000;right:647px;">200</div><div class="t" class="nm" style="top:946.48px;font-size:14.2px;line-height:14.2px;color:#000;right:520px;">12,460.00</div><div class="t" class="nm" style="top:946.48px;font-size:14.2px;line-height:14.2px;color:#000;right:406px;">24</div><div class="t" class="nm" style="top:946.48px;font-size:14.2px;line-height:14.2px;color:#000;right:278px;">1,495.20</div><div class="t" class="nm" style="top:946.48px;font-size:14.2px;line-height:14.2px;color:#000;right:129px;">9.30</div><div class="r" style="left:77px;top:963px;width:159px;height:19px;background:#d9d9d9;"></div><div class="r" style="left:237px;top:963px;width:185px;height:19px;background:#d9d9d9;"></div><div class="r" style="left:423px;top:963px;width:140px;height:19px;background:#d9d9d9;"></div><div class="r" style="left:564px;top:963px;width:140px;height:19px;background:#d9d9d9;"></div><div class="r" style="left:705px;top:963px;width:92px;height:19px;background:#d9d9d9;"></div><div class="r" style="left:798px;top:963px;width:128px;height:19px;background:#d9d9d9;"></div><div class="r" style="left:927px;top:963px;width:105px;height:19px;background:#d9d9d9;"></div><div class="r" style="left:1033px;top:963px;width:131px;height:19px;background:#d9d9d9;"></div><div class="r" style="left:1165px;top:963px;width:110px;height:19px;background:#d9d9d9;"></div><div class="r" style="left:1276px;top:963px;width:130px;height:19px;background:#d9d9d9;"></div><div class="r" style="left:1407px;top:963px;width:109px;height:19px;background:#d9d9d9;"></div><div class="r" style="left:1517px;top:963px;width:131px;height:19px;background:#d9d9d9;"></div><div class="r" style="left:1649px;top:963px;width:144px;height:19px;background:#d9d9d9;"></div><div class="t" class="tx" style="top:966.15px;font-size:14px;line-height:14px;color:#000;left:79.00px;transform-origin:0 0;transform:scaleX(0.9600);">CONTRAMPL</div><div class="r" style="left:239px;width:183px;top:963px;height:19px;overflow:hidden;"><div class="t tx" style="left:0;top:3.15px;font-size:14px;line-height:14px;color:#000;transform-origin:0 0;transform:scaleX(1.02);">Skywalker trampoline - 15ft round</div></div><div class="t" class="tx" style="top:966.15px;font-size:14px;line-height:14px;color:#000;left:425.30px;transform-origin:0 0;transform:scaleX(0.9341);">WHOLESALE</div><div class="t" class="tx" style="top:966.15px;font-size:14px;line-height:14px;color:#000;left:566.60px;transform-origin:0 0;transform:scaleX(0.9566);">PRODWHOLE</div><div class="t" class="nm" style="top:966.48px;font-size:14.2px;line-height:14.2px;color:#000;right:1125px;">137</div><div class="t" class="nm" style="top:966.48px;font-size:14.2px;line-height:14.2px;color:#000;right:1000px;">31,551.10</div><div class="t" class="nm" style="top:966.48px;font-size:14.2px;line-height:14.2px;color:#000;right:890px;">6,698</div><div class="t" class="nm" style="top:966.48px;font-size:14.2px;line-height:14.2px;color:#000;right:762px;">1,542,549.40</div><div class="t" class="nm" style="top:966.48px;font-size:14.2px;line-height:14.2px;color:#000;right:647px;">6,835</div><div class="t" class="nm" style="top:966.48px;font-size:14.2px;line-height:14.2px;color:#000;right:520px;">1,574,100.50</div><div class="t" class="nm" style="top:966.48px;font-size:14.2px;line-height:14.2px;color:#000;right:406px;">0</div><div class="t" class="nm" style="top:966.48px;font-size:14.2px;line-height:14.2px;color:#000;right:294px;">-</div><div class="t" class="nm" style="top:966.48px;font-size:14.2px;line-height:14.2px;color:#000;right:129px;">99.78</div><div class="t" class="tx" style="top:986.15px;font-size:14px;line-height:14px;color:#000;left:79.00px;transform-origin:0 0;transform:scaleX(0.9600);">CONWEIGHT1</div><div class="r" style="left:239px;width:183px;top:983px;height:19px;overflow:hidden;"><div class="t tx" style="left:0;top:3.15px;font-size:14px;line-height:14px;color:#000;transform-origin:0 0;transform:scaleX(1.02);">Bowflex Adjustable Dumbbells</div></div><div class="t" class="tx" style="top:986.15px;font-size:14px;line-height:14px;color:#000;left:425.30px;transform-origin:0 0;transform:scaleX(0.9341);">WHOLESALE</div><div class="t" class="tx" style="top:986.15px;font-size:14px;line-height:14px;color:#000;left:566.60px;transform-origin:0 0;transform:scaleX(0.9566);">PRODWHOLE</div><div class="t" class="nm" style="top:986.48px;font-size:14.2px;line-height:14.2px;color:#000;right:1125px;">170</div><div class="t" class="nm" style="top:986.48px;font-size:14.2px;line-height:14.2px;color:#000;right:1000px;">35,581.00</div><div class="t" class="nm" style="top:986.48px;font-size:14.2px;line-height:14.2px;color:#000;right:890px;">5,949</div><div class="t" class="nm" style="top:986.48px;font-size:14.2px;line-height:14.2px;color:#000;right:762px;">1,245,125.70</div><div class="t" class="nm" style="top:986.48px;font-size:14.2px;line-height:14.2px;color:#000;right:647px;">6,119</div><div class="t" class="nm" style="top:986.48px;font-size:14.2px;line-height:14.2px;color:#000;right:520px;">1,280,706.70</div><div class="t" class="nm" style="top:986.48px;font-size:14.2px;line-height:14.2px;color:#000;right:406px;">0</div><div class="t" class="nm" style="top:986.48px;font-size:14.2px;line-height:14.2px;color:#000;right:294px;">-</div><div class="t" class="nm" style="top:986.48px;font-size:14.2px;line-height:14.2px;color:#000;right:129px;">71.99</div><div class="r" style="left:77px;top:1003px;width:159px;height:19px;background:#d9d9d9;"></div><div class="r" style="left:237px;top:1003px;width:185px;height:19px;background:#d9d9d9;"></div><div class="r" style="left:423px;top:1003px;width:140px;height:19px;background:#d9d9d9;"></div><div class="r" style="left:564px;top:1003px;width:140px;height:19px;background:#d9d9d9;"></div><div class="r" style="left:705px;top:1003px;width:92px;height:19px;background:#d9d9d9;"></div><div class="r" style="left:798px;top:1003px;width:128px;height:19px;background:#d9d9d9;"></div><div class="r" style="left:927px;top:1003px;width:105px;height:19px;background:#d9d9d9;"></div><div class="r" style="left:1033px;top:1003px;width:131px;height:19px;background:#d9d9d9;"></div><div class="r" style="left:1165px;top:1003px;width:110px;height:19px;background:#d9d9d9;"></div><div class="r" style="left:1276px;top:1003px;width:130px;height:19px;background:#d9d9d9;"></div><div class="r" style="left:1407px;top:1003px;width:109px;height:19px;background:#d9d9d9;"></div><div class="r" style="left:1517px;top:1003px;width:131px;height:19px;background:#d9d9d9;"></div><div class="r" style="left:1649px;top:1003px;width:144px;height:19px;background:#d9d9d9;"></div><div class="t" class="tx" style="top:1006.15px;font-size:14px;line-height:14px;color:#000;left:79.00px;transform-origin:0 0;transform:scaleX(0.9600);">ELE32LED</div><div class="r" style="left:239px;width:183px;top:1003px;height:19px;overflow:hidden;"><div class="t tx" style="left:0;top:3.15px;font-size:14px;line-height:14px;color:#000;transform-origin:0 0;transform:scaleX(1.02);">Samsung 40-Inch LED HDTV</div></div><div class="t" class="tx" style="top:1006.15px;font-size:14px;line-height:14px;color:#000;left:425.30px;transform-origin:0 0;transform:scaleX(0.9341);">WHOLESALE</div><div class="t" class="tx" style="top:1006.15px;font-size:14px;line-height:14px;color:#000;left:566.60px;transform-origin:0 0;transform:scaleX(0.9566);">PRODWHOLE</div><div class="t" class="nm" style="top:1006.48px;font-size:14.2px;line-height:14.2px;color:#000;right:1125px;">0</div><div class="t" class="nm" style="top:1006.48px;font-size:14.2px;line-height:14.2px;color:#000;right:1016px;">-</div><div class="t" class="nm" style="top:1006.48px;font-size:14.2px;line-height:14.2px;color:#000;right:890px;">0</div><div class="t" class="nm" style="top:1006.48px;font-size:14.2px;line-height:14.2px;color:#000;right:778px;">-</div><div class="t" class="nm" style="top:1006.48px;font-size:14.2px;line-height:14.2px;color:#000;right:647px;">0</div><div class="t" class="nm" style="top:1006.48px;font-size:14.2px;line-height:14.2px;color:#000;right:536px;">-</div><div class="t" class="nm" style="top:1006.48px;font-size:14.2px;line-height:14.2px;color:#000;right:406px;">0</div><div class="t" class="nm" style="top:1006.48px;font-size:14.2px;line-height:14.2px;color:#000;right:294px;">-</div><div class="t" class="nm" style="top:1006.48px;font-size:14.2px;line-height:14.2px;color:#000;right:129px;">0.00</div><div class="t" class="tx" style="top:1026.15px;font-size:14px;line-height:14px;color:#000;left:79.00px;transform-origin:0 0;transform:scaleX(0.9600);">ELEBOARD</div><div class="r" style="left:239px;width:183px;top:1023px;height:19px;overflow:hidden;"><div class="t tx" style="left:0;top:3.15px;font-size:14px;line-height:14px;color:#000;transform-origin:0 0;transform:scaleX(1.02);">Laptop computer motherboard</div></div><div class="t" class="tx" style="top:1026.15px;font-size:14px;line-height:14px;color:#000;left:425.30px;transform-origin:0 0;transform:scaleX(0.9341);">WHOLESALE</div><div class="t" class="tx" style="top:1026.15px;font-size:14px;line-height:14px;color:#000;left:566.60px;transform-origin:0 0;transform:scaleX(0.9566);">PRODWHOLE</div><div class="t" class="nm" style="top:1026.48px;font-size:14.2px;line-height:14.2px;color:#000;right:1125px;">0</div><div class="t" class="nm" style="top:1026.48px;font-size:14.2px;line-height:14.2px;color:#000;right:1016px;">-</div><div class="t" class="nm" style="top:1026.48px;font-size:14.2px;line-height:14.2px;color:#000;right:890px;">0</div><div class="t" class="nm" style="top:1026.48px;font-size:14.2px;line-height:14.2px;color:#000;right:778px;">-</div><div class="t" class="nm" style="top:1026.48px;font-size:14.2px;line-height:14.2px;color:#000;right:647px;">0</div><div class="t" class="nm" style="top:1026.48px;font-size:14.2px;line-height:14.2px;color:#000;right:536px;">-</div><div class="t" class="nm" style="top:1026.48px;font-size:14.2px;line-height:14.2px;color:#000;right:406px;">0</div><div class="t" class="nm" style="top:1026.48px;font-size:14.2px;line-height:14.2px;color:#000;right:294px;">-</div><div class="t" class="nm" style="top:1026.48px;font-size:14.2px;line-height:14.2px;color:#000;right:129px;">0.00</div><div class="r" style="left:77px;top:1043px;width:159px;height:19px;background:#d9d9d9;"></div><div class="r" style="left:237px;top:1043px;width:185px;height:19px;background:#d9d9d9;"></div><div class="r" style="left:423px;top:1043px;width:140px;height:19px;background:#d9d9d9;"></div><div class="r" style="left:564px;top:1043px;width:140px;height:19px;background:#d9d9d9;"></div><div class="r" style="left:705px;top:1043px;width:92px;height:19px;background:#d9d9d9;"></div><div class="r" style="left:798px;top:1043px;width:128px;height:19px;background:#d9d9d9;"></div><div class="r" style="left:927px;top:1043px;width:105px;height:19px;background:#d9d9d9;"></div><div class="r" style="left:1033px;top:1043px;width:131px;height:19px;background:#d9d9d9;"></div><div class="r" style="left:1165px;top:1043px;width:110px;height:19px;background:#d9d9d9;"></div><div class="r" style="left:1276px;top:1043px;width:130px;height:19px;background:#d9d9d9;"></div><div class="r" style="left:1407px;top:1043px;width:109px;height:19px;background:#d9d9d9;"></div><div class="r" style="left:1517px;top:1043px;width:131px;height:19px;background:#d9d9d9;"></div><div class="r" style="left:1649px;top:1043px;width:144px;height:19px;background:#d9d9d9;"></div><div class="t" class="tx" style="top:1046.15px;font-size:14px;line-height:14px;color:#000;left:79.00px;transform-origin:0 0;transform:scaleX(0.9600);">ELEBOSE1</div><div class="r" style="left:239px;width:183px;top:1043px;height:19px;overflow:hidden;"><div class="t tx" style="left:0;top:3.15px;font-size:14px;line-height:14px;color:#000;transform-origin:0 0;transform:scaleX(1.02);">Bose Quiet Comfort Noise Cancelling</div></div><div class="t" class="tx" style="top:1046.15px;font-size:14px;line-height:14px;color:#000;left:425.30px;transform-origin:0 0;transform:scaleX(0.9341);">WHOLESALE</div><div class="t" class="tx" style="top:1046.15px;font-size:14px;line-height:14px;color:#000;left:566.60px;transform-origin:0 0;transform:scaleX(0.9566);">PRODWHOLE</div><div class="t" class="nm" style="top:1046.48px;font-size:14.2px;line-height:14.2px;color:#000;right:1125px;">0</div><div class="t" class="nm" style="top:1046.48px;font-size:14.2px;line-height:14.2px;color:#000;right:1016px;">-</div><div class="t" class="nm" style="top:1046.48px;font-size:14.2px;line-height:14.2px;color:#000;right:890px;">0</div><div class="t" class="nm" style="top:1046.48px;font-size:14.2px;line-height:14.2px;color:#000;right:778px;">-</div><div class="t" class="nm" style="top:1046.48px;font-size:14.2px;line-height:14.2px;color:#000;right:647px;">0</div><div class="t" class="nm" style="top:1046.48px;font-size:14.2px;line-height:14.2px;color:#000;right:536px;">-</div><div class="t" class="nm" style="top:1046.48px;font-size:14.2px;line-height:14.2px;color:#000;right:406px;">0</div><div class="t" class="nm" style="top:1046.48px;font-size:14.2px;line-height:14.2px;color:#000;right:294px;">-</div><div class="t" class="nm" style="top:1046.48px;font-size:14.2px;line-height:14.2px;color:#000;right:129px;">0.00</div><div class="t" class="tx" style="top:1066.15px;font-size:14px;line-height:14px;color:#000;left:79.00px;transform-origin:0 0;transform:scaleX(0.9600);">ELEBOSE2</div><div class="r" style="left:239px;width:183px;top:1063px;height:19px;overflow:hidden;"><div class="t tx" style="left:0;top:3.15px;font-size:14px;line-height:14px;color:#000;transform-origin:0 0;transform:scaleX(1.02);">Bose Bluetooth Headset Series</div></div><div class="t" class="tx" style="top:1066.15px;font-size:14px;line-height:14px;color:#000;left:425.30px;transform-origin:0 0;transform:scaleX(0.9341);">WHOLESALE</div><div class="t" class="tx" style="top:1066.15px;font-size:14px;line-height:14px;color:#000;left:566.60px;transform-origin:0 0;transform:scaleX(0.9566);">PRODWHOLE</div><div class="t" class="nm" style="top:1066.48px;font-size:14.2px;line-height:14.2px;color:#000;right:1125px;">0</div><div class="t" class="nm" style="top:1066.48px;font-size:14.2px;line-height:14.2px;color:#000;right:1016px;">-</div><div class="t" class="nm" style="top:1066.48px;font-size:14.2px;line-height:14.2px;color:#000;right:890px;">0</div><div class="t" class="nm" style="top:1066.48px;font-size:14.2px;line-height:14.2px;color:#000;right:778px;">-</div><div class="t" class="nm" style="top:1066.48px;font-size:14.2px;line-height:14.2px;color:#000;right:647px;">0</div><div class="t" class="nm" style="top:1066.48px;font-size:14.2px;line-height:14.2px;color:#000;right:536px;">-</div><div class="t" class="nm" style="top:1066.48px;font-size:14.2px;line-height:14.2px;color:#000;right:406px;">0</div><div class="t" class="nm" style="top:1066.48px;font-size:14.2px;line-height:14.2px;color:#000;right:294px;">-</div><div class="t" class="nm" style="top:1066.48px;font-size:14.2px;line-height:14.2px;color:#000;right:129px;">0.00</div><div class="r" style="left:77px;top:1083px;width:159px;height:19px;background:#d9d9d9;"></div><div class="r" style="left:237px;top:1083px;width:185px;height:19px;background:#d9d9d9;"></div><div class="r" style="left:423px;top:1083px;width:140px;height:19px;background:#d9d9d9;"></div><div class="r" style="left:564px;top:1083px;width:140px;height:19px;background:#d9d9d9;"></div><div class="r" style="left:705px;top:1083px;width:92px;height:19px;background:#d9d9d9;"></div><div class="r" style="left:798px;top:1083px;width:128px;height:19px;background:#d9d9d9;"></div><div class="r" style="left:927px;top:1083px;width:105px;height:19px;background:#d9d9d9;"></div><div class="r" style="left:1033px;top:1083px;width:131px;height:19px;background:#d9d9d9;"></div><div class="r" style="left:1165px;top:1083px;width:110px;height:19px;background:#d9d9d9;"></div><div class="r" style="left:1276px;top:1083px;width:130px;height:19px;background:#d9d9d9;"></div><div class="r" style="left:1407px;top:1083px;width:109px;height:19px;background:#d9d9d9;"></div><div class="r" style="left:1517px;top:1083px;width:131px;height:19px;background:#d9d9d9;"></div><div class="r" style="left:1649px;top:1083px;width:144px;height:19px;background:#d9d9d9;"></div><div class="t" class="tx" style="top:1086.15px;font-size:14px;line-height:14px;color:#000;left:79.00px;transform-origin:0 0;transform:scaleX(0.9600);">ELECOMP1</div><div class="r" style="left:239px;width:183px;top:1083px;height:19px;overflow:hidden;"><div class="t tx" style="left:0;top:3.15px;font-size:14px;line-height:14px;color:#000;transform-origin:0 0;transform:scaleX(1.02);">Dell desktop computer</div></div><div class="t" class="tx" style="top:1086.15px;font-size:14px;line-height:14px;color:#000;left:425.30px;transform-origin:0 0;transform:scaleX(0.9341);">WHOLESALE</div><div class="t" class="tx" style="top:1086.15px;font-size:14px;line-height:14px;color:#000;left:566.60px;transform-origin:0 0;transform:scaleX(0.9566);">PRODWHOLE</div><div class="t" class="nm" style="top:1086.48px;font-size:14.2px;line-height:14.2px;color:#000;right:1125px;">0</div><div class="t" class="nm" style="top:1086.48px;font-size:14.2px;line-height:14.2px;color:#000;right:1016px;">-</div><div class="t" class="nm" style="top:1086.48px;font-size:14.2px;line-height:14.2px;color:#000;right:890px;">0</div><div class="t" class="nm" style="top:1086.48px;font-size:14.2px;line-height:14.2px;color:#000;right:778px;">-</div><div class="t" class="nm" style="top:1086.48px;font-size:14.2px;line-height:14.2px;color:#000;right:647px;">0</div><div class="t" class="nm" style="top:1086.48px;font-size:14.2px;line-height:14.2px;color:#000;right:536px;">-</div><div class="t" class="nm" style="top:1086.48px;font-size:14.2px;line-height:14.2px;color:#000;right:406px;">0</div><div class="t" class="nm" style="top:1086.48px;font-size:14.2px;line-height:14.2px;color:#000;right:294px;">-</div><div class="t" class="nm" style="top:1086.48px;font-size:14.2px;line-height:14.2px;color:#000;right:129px;">0.00</div>
<div class="r" style="left:1898px;top:219px;width:22px;height:879px;background:#f3f3f3;"></div>
<div class="r" style="left:1898px;top:283px;width:1px;height:815px;background:#e2e2e2;"></div>
<svg class="r" style="left:1898px;top:219px" width="22" height="879"><path d="M7.1 12 L11.6 4.8 L16.1 12 Z" fill="#707070"/><path d="M7.1 870.2 L16.1 870.2 L11.6 877 Z" fill="#707070"/></svg>
<div class="r" style="left:1905px;top:236px;width:9px;height:421px;background:#707070;border-radius:4.5px;"></div>
<div class="r" style="left:0px;top:1098px;width:1920px;height:32px;background:#f0f0f0;"></div>
<div class="r" style="left:0px;top:1130px;width:1920px;height:1px;background:#d6d6d6;"></div>
<svg class="r" style="left:20px;top:1104px" width="60" height="20" fill="none" stroke="#8a8a8a" stroke-width="1.1"><path d="M14 5 L10 10 L14 15"/><path d="M42 5 L46 10 L42 15"/></svg>
<div class="r" style="left:117px;top:1099px;width:136px;height:27px;background:linear-gradient(#ffffff,#cbd7fb);border-radius:0 0 5px 5px;box-shadow:0 1px 2px rgba(0,0,0,0.25);"></div>
<div class="t" class="tb" style="top:1106.24px;font-size:13.3px;line-height:13.3px;color:#242424;font-weight:700;left:124.20px;transform-origin:0 0;transform:scaleX(1.0115);">Inventory Turnover</div>
<div class="r" style="left:124px;top:1121px;width:122px;height:2px;background:#107c41;"></div>
<div class="r" style="left:263px;top:1102px;width:201px;height:24px;background:#386aff;border-radius:4px;"></div><div class="t" class="tb" style="top:1108.14px;font-size:13.3px;line-height:13.3px;color:#ffffff;left:274.50px;transform-origin:0 0;transform:scaleX(1.0380);">Inventory Turnover (End Qty)</div>
<div class="r" style="left:473px;top:1102px;width:201px;height:24px;background:#386aff;border-radius:4px;"></div><div class="t" class="tb" style="top:1108.14px;font-size:13.3px;line-height:13.3px;color:#ffffff;left:484.50px;transform-origin:0 0;transform:scaleX(1.0379);">Inventory Transaction Details</div>
<div class="r" style="left:683px;top:1102px;width:66px;height:24px;background:#808080;border-radius:4px;"></div><div class="t" class="tb" style="top:1108.14px;font-size:13.3px;line-height:13.3px;color:#ffffff;left:691.80px;transform-origin:0 0;transform:scaleX(1.0647);">Options</div>
<div class="r" style="left:758px;top:1102px;width:92px;height:24px;background:#808080;border-radius:4px;"></div><div class="t" class="tb" style="top:1108.14px;font-size:13.3px;line-height:13.3px;color:#ffffff;left:768.70px;transform-origin:0 0;transform:scaleX(1.0717);">Information</div>
<div class="r" style="left:258px;top:1106px;width:1px;height:16px;background:#cfcfcf;"></div>
<div class="r" style="left:468px;top:1106px;width:1px;height:16px;background:#cfcfcf;"></div>
<div class="r" style="left:678px;top:1106px;width:1px;height:16px;background:#cfcfcf;"></div>
<div class="r" style="left:753px;top:1106px;width:1px;height:16px;background:#cfcfcf;"></div>
<div class="r" style="left:854px;top:1106px;width:1px;height:16px;background:#cfcfcf;"></div>
<svg class="r" style="left:894px;top:1106px" width="16" height="16" stroke="#444" stroke-width="1.2"><path d="M8 2 V14 M2 8 H14"/></svg>
<svg class="r" style="left:1288px;top:1106px" width="12" height="16"><circle cx="5" cy="3" r="1.1" fill="#444"/><circle cx="5" cy="8" r="1.1" fill="#444"/><circle cx="5" cy="13" r="1.1" fill="#444"/></svg>
<div class="r" style="left:1309px;top:1104px;width:592px;height:19px;background:#f6f6f6;border-radius:9px;"></div>
<svg class="r" style="left:1309px;top:1104px" width="592" height="19"><path d="M4.3 9.5 L11.8 5 V14 Z M587.3 9.5 L580 5 V14 Z" fill="#6e6e6e"/></svg>
<div class="r" style="left:1326px;top:1109px;width:546px;height:9px;background:#707070;border-radius:4.5px;"></div>
<div class="r" style="left:0px;top:1131px;width:1920px;height:21px;background:#f3f3f3;"></div>
<div class="t" style="top:1136.34px;font-size:12px;line-height:12px;color:#333;left:11.30px;transform-origin:0 0;transform:scaleX(0.8764);">Ready</div>
<div class="t" style="top:1136.34px;font-size:12px;line-height:12px;color:#333;left:58.30px;transform-origin:0 0;transform:scaleX(0.9175);">Calculate</div>
<svg class="r" style="left:124px;top:1133px" width="18" height="18" fill="none" stroke="#333" stroke-width="1"><circle cx="8" cy="3.5" r="1.8"/><path d="M2.5 6 L8 7.5 L13.5 6 M8 7.5 V11 L5.5 16 M8 11 L10 14"/><path d="M10.5 11.5 L16 16.5 M16 11.5 L10.5 16.5"/></svg>
<div class="t" class="acc" style="top:1135.84px;font-size:12px;line-height:12px;color:#333;font-weight:700;left:143.30px;transform-origin:0 0;transform:scaleX(0.8745);">Accessibility: Investigate</div>
<div class="r" style="left:1620px;top:1131px;width:40px;height:21px;background:#e0e0e0;"></div>
<svg class="r" style="left:1600px;top:1128px" width="320" height="24" viewBox="1600 1128 320 24" fill="none" stroke="#333" stroke-width="1.1">
<rect x="1633.6" y="1134.6" width="12.2" height="12" stroke-width="1.3"/><path d="M1637.7 1134.6 V1146.6 M1641.7 1134.6 V1146.6 M1633.6 1138.6 H1645.8 M1633.6 1142.6 H1645.8" stroke-width="1.3"/>
<rect x="1673.6" y="1134.6" width="13.2" height="12.4"/><rect x="1676.6" y="1137.2" width="7.2" height="7.2"/><path d="M1678 1139.2 H1683 M1678 1140.8 H1683 M1678 1142.4 H1683" stroke-width="0.8"/>
<rect x="1713.6" y="1134.6" width="13.2" height="12.4"/><path d="M1718 1134.6 V1139.6 H1722.2 V1134.6"/>
<path d="M1745.6 1140.5 H1754"/><path d="M1759 1140.5 H1859" stroke="#8a8a8a" stroke-width="1"/><path d="M1864 1140.3 H1872 M1868 1136.3 V1144.3"/>
</svg>
<div class="r" style="left:1807px;top:1136px;width:4.5px;height:11px;background:#606060;border-radius:1px;"></div>
<div class="t" class="zm" style="top:1136.34px;font-size:12px;line-height:12px;color:#333;left:1885.40px;transform-origin:0 0;transform:scaleX(0.8471);">100%</div></body></html>
